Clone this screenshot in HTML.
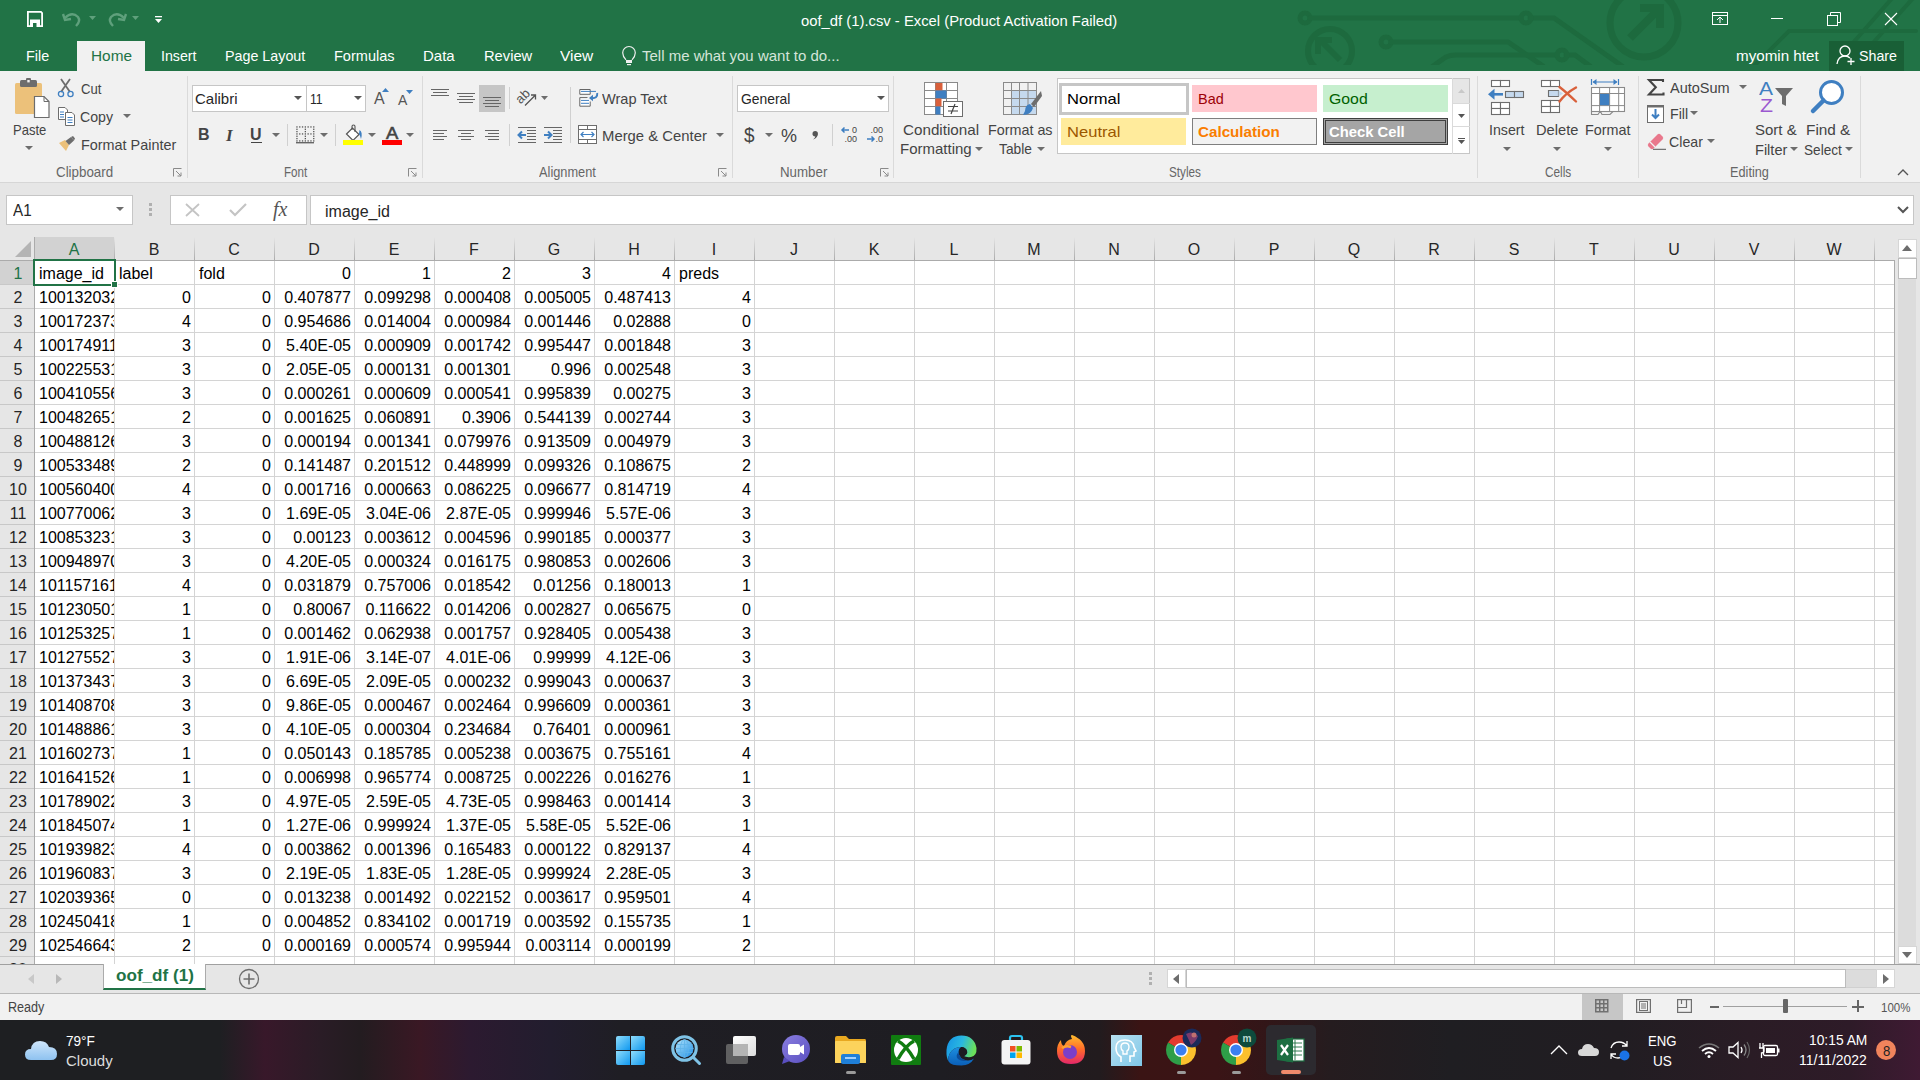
<!DOCTYPE html><html><head><meta charset="utf-8"><title>Excel</title><style>
*{box-sizing:border-box;margin:0;padding:0}
html,body{width:1920px;height:1080px;overflow:hidden;background:#fff}
body{position:relative;font-family:"Liberation Sans",sans-serif;color:#000}
.a{position:absolute}
.t{position:absolute;white-space:nowrap;line-height:1}
svg{position:absolute;overflow:visible}
#top{left:0;top:0;width:1920px;height:71px;background:#217346}
#rib{left:0;top:71px;width:1920px;height:112px;background:#f1f1f1;border-bottom:1px solid #d6d6d6}
#fb{left:0;top:183px;width:1920px;height:781px;background:#e6e6e6}
.rt{position:absolute;white-space:nowrap;line-height:1;font-size:15px;color:#262626}
.tab{position:absolute;white-space:nowrap;line-height:1;font-size:15px;color:#fff;top:48px}
.cell{position:absolute;white-space:nowrap;line-height:1;font-size:16px;color:#000;overflow:hidden;height:23px;padding-top:5px}
.r{text-align:right;padding-right:3px}
.l{text-align:left;padding-left:4px}
.hd{position:absolute;white-space:nowrap;line-height:1;font-size:16px;color:#262626;text-align:center}
.sep{position:absolute;width:1px;background:#d4d4d4}
</style></head><body>
<div id="top" class="a">
<svg width="1920" height="71" style="left:0;top:0" viewBox="0 0 1920 71">
<defs><clipPath id="dc"><rect x="0" y="0" width="1920" height="65"/></clipPath></defs>
<g clip-path="url(#dc)" stroke="#1d6a3e" stroke-width="5" fill="none" stroke-linecap="round">
<circle cx="1305" cy="18" r="5"/><path d="M1310 18 H1521 M1530 18 H1554 L1622 66"/><circle cx="1526" cy="18" r="5"/>
<circle cx="1386" cy="42" r="5"/><path d="M1391 42 H1508 L1543 66"/>
<path d="M1433 66 L1446 57 Q1450 55 1456 55 H1557 M1566 55 H1575 L1590 66"/><circle cx="1562" cy="55" r="5"/>
<circle cx="1644" cy="23" r="34" stroke-width="7"/>
<path d="M1630 38 L1660 8 M1640 8 H1660 V28" stroke-width="8" stroke-linecap="butt"/>
<circle cx="1330" cy="51" r="22" stroke-width="6"/>
<path d="M1340 60 L1320 40 M1318 54 V40 H1332" stroke-width="6" stroke-linecap="butt"/>
<path d="M1752 68 L1789 31 H1916 M1894 -4 L1852 44 M1915 -4 L1872 44" stroke-width="4"/>
</g></svg>
<svg width="18" height="18" style="left:26px;top:10px" viewBox="0 0 18 18">
<path d="M1.9 1.9 H15 L16.1 3 V16.1 H1.9 Z" fill="none" stroke="#fff" stroke-width="1.8"/>
<rect x="4" y="9.5" width="10" height="1.6" fill="#fff"/>
<rect x="4" y="11" width="10" height="6" fill="#fff"/><rect x="7" y="13" width="3.5" height="4" fill="#217346"/>
</svg>
<svg width="22" height="20" style="left:62px;top:10px" viewBox="0 0 22 20"><path d="M3 8 Q10 1 16 7 Q19 11 14 16" fill="none" stroke="#5fa07c" stroke-width="2.4"/><path d="M1 4 L3 10 L9 9" fill="none" stroke="#5fa07c" stroke-width="2.4"/></svg>
<svg width="8" height="5" style="left:89px;top:16px" viewBox="0 0 8 5"><path d="M0 0 H7 L3.5 4 Z" fill="#5fa07c"/></svg>
<svg width="22" height="20" style="left:105px;top:10px" viewBox="0 0 22 20"><path d="M19 8 Q12 1 6 7 Q3 11 8 16" fill="none" stroke="#5fa07c" stroke-width="2.4"/><path d="M21 4 L19 10 L13 9" fill="none" stroke="#5fa07c" stroke-width="2.4"/></svg>
<svg width="8" height="5" style="left:132px;top:16px" viewBox="0 0 8 5"><path d="M0 0 H7 L3.5 4 Z" fill="#5fa07c"/></svg>
<svg width="10" height="12" style="left:154px;top:14px" viewBox="0 0 10 12"><rect x="1" y="2" width="7" height="1.3" fill="#fff"/><path d="M1 5 H8 L4.5 9 Z" fill="#fff"/></svg>
<div class="t" style="left:801.00px;top:13px;font-size:15px;color:#fff;transform:scaleX(0.9875);transform-origin:0 0;">oof_df (1).csv - Excel (Product Activation Failed)</div>
<svg width="16" height="14" style="left:1712px;top:12px" viewBox="0 0 16 14"><rect x="0.5" y="0.5" width="15" height="12" fill="none" stroke="#fff"/><path d="M0.5 3.5 H15.5 M8 11 V5 M5 8 L8 5 L11 8" fill="none" stroke="#fff"/></svg>
<div class="a" style="left:1771px;top:18px;width:12px;height:1px;background:#fff"></div>
<svg width="14" height="14" style="left:1827px;top:12px" viewBox="0 0 14 14"><rect x="0.5" y="3.5" width="10" height="10" fill="none" stroke="#fff"/><path d="M3.5 3.5 V0.5 H13.5 V10.5 H10.5" fill="none" stroke="#fff"/></svg>
<svg width="14" height="14" style="left:1884px;top:12px" viewBox="0 0 14 14"><path d="M1 1 L13 13 M13 1 L1 13" stroke="#fff" stroke-width="1.1"/></svg>
<div class="a" style="left:77px;top:41px;width:68px;height:30px;background:#f1f1f1"></div>
<div class="t" style="left:26.00px;top:48px;font-size:15px;color:#fff;transform:scaleX(0.9583);transform-origin:0 0;">File</div>
<div class="t" style="left:91.00px;top:48px;font-size:15px;color:#217346;transform:scaleX(1.0250);transform-origin:0 0;">Home</div>
<div class="t" style="left:161.00px;top:48px;font-size:15px;color:#fff;transform:scaleX(0.9474);transform-origin:0 0;">Insert</div>
<div class="t" style="left:225.00px;top:48px;font-size:15px;color:#fff;transform:scaleX(0.9529);transform-origin:0 0;">Page Layout</div>
<div class="t" style="left:334.00px;top:48px;font-size:15px;color:#fff;transform:scaleX(0.9683);transform-origin:0 0;">Formulas</div>
<div class="t" style="left:423.00px;top:48px;font-size:15px;color:#fff;">Data</div>
<div class="t" style="left:484.00px;top:48px;font-size:15px;color:#fff;transform:scaleX(0.9796);transform-origin:0 0;">Review</div>
<div class="t" style="left:560.00px;top:48px;font-size:15px;color:#fff;transform:scaleX(1.0312);transform-origin:0 0;">View</div>
<svg width="14" height="20" style="left:622px;top:46px" viewBox="0 0 14 20"><path d="M4 13.8 Q0.7 10.5 0.7 6.8 A6.3 6.3 0 0 1 13.3 6.8 Q13.3 10.5 10 13.8" fill="none" stroke="#f0f0f0" stroke-width="1.2"/><rect x="4" y="14" width="6" height="3" fill="#f0f0f0"/><rect x="5" y="18" width="4" height="1.2" fill="#f0f0f0"/></svg>
<div class="t" style="left:642.00px;top:48px;font-size:15px;color:#d5e5da;">Tell me what you want to do...</div>
<div class="t" style="left:1736.00px;top:48px;font-size:15px;color:#fff;transform:scaleX(1.0120);transform-origin:0 0;">myomin htet</div>
<div class="a" style="left:1829px;top:41px;width:75px;height:30px;background:#195f36"></div>
<svg width="20" height="20" style="left:1836px;top:45px" viewBox="0 0 20 20"><circle cx="9" cy="6" r="5" fill="none" stroke="#fff" stroke-width="1.3"/><path d="M1 19 Q2 11 9 11 Q12 11 14 13" fill="none" stroke="#fff" stroke-width="1.3"/><path d="M15 13 V20 M11.5 16.5 H18.5" stroke="#fff" stroke-width="1.3"/></svg>
<div class="t" style="left:1859.00px;top:48px;font-size:15px;color:#fff;transform:scaleX(0.9500);transform-origin:0 0;">Share</div>
</div>
<div id="rib" class="a"></div>
<div class="sep" style="left:187px;top:76px;height:102px;background:#dadada"></div>
<div class="sep" style="left:422px;top:76px;height:102px;background:#dadada"></div>
<div class="sep" style="left:732px;top:76px;height:102px;background:#dadada"></div>
<div class="sep" style="left:893px;top:76px;height:102px;background:#dadada"></div>
<div class="sep" style="left:1477px;top:76px;height:102px;background:#dadada"></div>
<div class="sep" style="left:1638px;top:76px;height:102px;background:#dadada"></div>
<div class="sep" style="left:1860px;top:76px;height:102px;background:#dadada"></div>
<div class="t" style="left:56.00px;top:164px;font-size:15px;color:#666;transform:scaleX(0.8906);transform-origin:0 0;">Clipboard</div>
<div class="t" style="left:284.00px;top:164px;font-size:15px;color:#666;transform:scaleX(0.7742);transform-origin:0 0;">Font</div>
<div class="t" style="left:539.00px;top:164px;font-size:15px;color:#666;transform:scaleX(0.8529);transform-origin:0 0;">Alignment</div>
<div class="t" style="left:780.00px;top:164px;font-size:15px;color:#666;transform:scaleX(0.8868);transform-origin:0 0;">Number</div>
<div class="t" style="left:1169.00px;top:164px;font-size:15px;color:#666;transform:scaleX(0.7805);transform-origin:0 0;">Styles</div>
<div class="t" style="left:1545.00px;top:164px;font-size:15px;color:#666;transform:scaleX(0.7879);transform-origin:0 0;">Cells</div>
<div class="t" style="left:1730.00px;top:164px;font-size:15px;color:#666;transform:scaleX(0.8478);transform-origin:0 0;">Editing</div>
<svg width="40" height="42" style="left:12px;top:78px" viewBox="0 0 40 42">
<rect x="3" y="5" width="27" height="31" rx="1.5" fill="#ecc17a"/>
<rect x="8" y="2" width="17" height="7" rx="1.5" fill="#6d6d6d"/><rect x="14" y="0" width="5" height="5" rx="1" fill="#6d6d6d"/><rect x="15.3" y="2" width="2.4" height="2.4" fill="#f1f1f1"/>
<path d="M22.5 18.5 H32 L37 23.5 V39.5 H22.5 Z" fill="#fff" stroke="#6d6d6d" stroke-width="1.2"/><path d="M32 18.5 V23.5 H37" fill="none" stroke="#6d6d6d" stroke-width="1"/>
</svg>
<div class="t" style="left:13.00px;top:122px;font-size:15px;color:#444;transform:scaleX(0.8684);transform-origin:0 0;">Paste</div>
<svg width="8" height="5" style="left:25px;top:146px" viewBox="0 0 8 5"><path d="M0 0 H8 L4 4 Z" fill="#6d6d6d"/></svg>
<svg width="18" height="19" style="left:57px;top:79px" viewBox="0 0 18 19">
<path d="M4 0 L13 13 M13 0 L4 13" stroke="#6d6d6d" stroke-width="1.8"/>
<circle cx="4" cy="15" r="2.6" fill="none" stroke="#3f7fc1" stroke-width="1.3"/><circle cx="13.5" cy="15" r="2.6" fill="none" stroke="#3f7fc1" stroke-width="1.3"/>
</svg>
<div class="t" style="left:81.00px;top:81px;font-size:15px;color:#444;transform:scaleX(0.8750);transform-origin:0 0;">Cut</div>
<svg width="18" height="19" style="left:58px;top:107px" viewBox="0 0 18 19">
<path d="M0.5 0.5 H7 L9.5 3 V12.5 H0.5 Z" fill="#fff" stroke="#6d6d6d"/>
<path d="M7.5 5.5 H14 L16.5 8 V18.5 H7.5 Z" fill="#fff" stroke="#6d6d6d"/>
<path d="M2 5 H6 M2 7.5 H6 M2 10 H6 M9.5 10.5 H14.5 M9.5 13 H14.5 M9.5 15.5 H14.5" stroke="#3f7fc1" stroke-width="1"/>
</svg>
<div class="t" style="left:80.00px;top:109px;font-size:15px;color:#444;transform:scaleX(0.9444);transform-origin:0 0;">Copy</div>
<svg width="8" height="5" style="left:123px;top:114px" viewBox="0 0 8 5"><path d="M0 0 H8 L4 4 Z" fill="#6d6d6d"/></svg>
<svg width="18" height="16" style="left:58px;top:136px" viewBox="0 0 18 16">
<path d="M1 7 L7 4 L11 9 L8 15 Z" fill="#ecc17a"/><path d="M7.5 5 L13 1 L16 4.5 L11 9 Z" fill="#6d6d6d"/><path d="M13 1 L15 0 L17 2.5 L16 4.5" fill="#6d6d6d"/>
</svg>
<div class="t" style="left:81.00px;top:137px;font-size:15px;color:#444;transform:scaleX(0.9596);transform-origin:0 0;">Format Painter</div>
<svg width="9" height="9" style="left:173px;top:168px" viewBox="0 0 9 9"><path d="M0.5 8.5 V0.5 H8.5" fill="none" stroke="#8a8a8a"/><path d="M3 3 L8 8 M8 4.5 V8 H4.5" fill="none" stroke="#8a8a8a"/></svg>
<div class="a" style="left:192px;top:85px;width:115px;height:27px;background:#fff;border:1px solid #c6c6c6"></div>
<div class="a" style="left:306px;top:85px;width:60px;height:27px;background:#fff;border:1px solid #c6c6c6"></div>
<div class="t" style="left:195.00px;top:91px;font-size:15px;color:#262626;">Calibri</div>
<div class="t" style="left:310.00px;top:91px;font-size:15px;color:#262626;transform:scaleX(0.8125);transform-origin:0 0;">11</div>
<svg width="8" height="5" style="left:294px;top:96px" viewBox="0 0 8 5"><path d="M0 0 H8 L4 4 Z" fill="#555"/></svg>
<svg width="8" height="5" style="left:354px;top:96px" viewBox="0 0 8 5"><path d="M0 0 H8 L4 4 Z" fill="#555"/></svg>
<div class="rt" style="left:374px;top:91px;font-size:16px;color:#555">A</div>
<svg width="7" height="4" style="left:382px;top:88px" viewBox="0 0 7 4"><path d="M0 4 H7 L3.5 0 Z" fill="#3f7fc1"/></svg>
<div class="rt" style="left:398px;top:93px;font-size:14px;color:#555">A</div>
<svg width="7" height="4" style="left:406px;top:90px" viewBox="0 0 7 4"><path d="M0 0 H7 L3.5 4 Z" fill="#3f7fc1"/></svg>
<div class="rt" style="left:198px;top:127px;font-size:16px;font-weight:bold;color:#444">B</div>
<div class="rt" style="left:226px;top:127px;font-size:17px;font-style:italic;font-family:'Liberation Serif',serif;font-weight:bold;color:#444">I</div>
<div class="rt" style="left:250px;top:127px;font-size:16px;font-weight:bold;color:#444">U</div>
<div class="a" style="left:251px;top:142px;width:11px;height:1px;background:#444"></div>
<svg width="8" height="5" style="left:272px;top:133px" viewBox="0 0 8 5"><path d="M0 0 H8 L4 4 Z" fill="#6d6d6d"/></svg>
<div class="sep" style="left:287px;top:124px;height:22px;background:#d0d0d0"></div>
<svg width="19" height="19" style="left:296px;top:126px" viewBox="0 0 19 19"><rect x="0.30" y="0.30" width="1.3" height="1.3" fill="#555"/><rect x="3.10" y="0.30" width="1.3" height="1.3" fill="#555"/><rect x="5.90" y="0.30" width="1.3" height="1.3" fill="#555"/><rect x="8.70" y="0.30" width="1.3" height="1.3" fill="#555"/><rect x="11.50" y="0.30" width="1.3" height="1.3" fill="#555"/><rect x="14.30" y="0.30" width="1.3" height="1.3" fill="#555"/><rect x="17.10" y="0.30" width="1.3" height="1.3" fill="#555"/><rect x="0.30" y="2.63" width="1.3" height="1.3" fill="#555"/><rect x="8.70" y="2.63" width="1.3" height="1.3" fill="#555"/><rect x="17.10" y="2.63" width="1.3" height="1.3" fill="#555"/><rect x="0.30" y="4.96" width="1.3" height="1.3" fill="#555"/><rect x="8.70" y="4.96" width="1.3" height="1.3" fill="#555"/><rect x="17.10" y="4.96" width="1.3" height="1.3" fill="#555"/><rect x="0.30" y="7.29" width="1.3" height="1.3" fill="#555"/><rect x="3.10" y="7.29" width="1.3" height="1.3" fill="#555"/><rect x="5.90" y="7.29" width="1.3" height="1.3" fill="#555"/><rect x="8.70" y="7.29" width="1.3" height="1.3" fill="#555"/><rect x="11.50" y="7.29" width="1.3" height="1.3" fill="#555"/><rect x="14.30" y="7.29" width="1.3" height="1.3" fill="#555"/><rect x="17.10" y="7.29" width="1.3" height="1.3" fill="#555"/><rect x="0.30" y="9.62" width="1.3" height="1.3" fill="#555"/><rect x="8.70" y="9.62" width="1.3" height="1.3" fill="#555"/><rect x="17.10" y="9.62" width="1.3" height="1.3" fill="#555"/><rect x="0.30" y="11.95" width="1.3" height="1.3" fill="#555"/><rect x="8.70" y="11.95" width="1.3" height="1.3" fill="#555"/><rect x="17.10" y="11.95" width="1.3" height="1.3" fill="#555"/><rect x="0.30" y="14.28" width="1.3" height="1.3" fill="#555"/><rect x="3.10" y="14.28" width="1.3" height="1.3" fill="#555"/><rect x="5.90" y="14.28" width="1.3" height="1.3" fill="#555"/><rect x="8.70" y="14.28" width="1.3" height="1.3" fill="#555"/><rect x="11.50" y="14.28" width="1.3" height="1.3" fill="#555"/><rect x="14.30" y="14.28" width="1.3" height="1.3" fill="#555"/><rect x="17.10" y="14.28" width="1.3" height="1.3" fill="#555"/><rect x="0" y="16" width="18" height="1.4" fill="#666"/></svg>
<svg width="8" height="5" style="left:320px;top:133px" viewBox="0 0 8 5"><path d="M0 0 H8 L4 4 Z" fill="#6d6d6d"/></svg>
<div class="sep" style="left:335px;top:124px;height:22px;background:#d0d0d0"></div>
<svg width="24" height="22" style="left:342px;top:124px" viewBox="0 0 24 22"><path d="M4.5 10 L10.5 4 L17 10.5 L11 16.5 Z" fill="#fff" stroke="#555" stroke-width="1.2"/><path d="M10 6 V2.5 Q10 1 11.5 1 Q13 1 13 2.5 V8" fill="none" stroke="#555" stroke-width="1.1"/><path d="M17.5 6 Q21 8 19 15 Q18 11 17 10 Z" fill="#3f7fc1"/><rect x="1" y="16" width="20" height="5" fill="#ffff00"/></svg>
<svg width="8" height="5" style="left:368px;top:133px" viewBox="0 0 8 5"><path d="M0 0 H8 L4 4 Z" fill="#6d6d6d"/></svg>
<div class="t" style="left:386.00px;top:125px;font-size:17px;color:#444;transform:scaleX(1.0833);transform-origin:0 0;-webkit-text-stroke:0.6px #444;">A</div>
<div class="a" style="left:382px;top:140px;width:20px;height:5px;background:#ff0000"></div>
<svg width="8" height="5" style="left:406px;top:133px" viewBox="0 0 8 5"><path d="M0 0 H8 L4 4 Z" fill="#6d6d6d"/></svg>
<svg width="9" height="9" style="left:408px;top:168px" viewBox="0 0 9 9"><path d="M0.5 8.5 V0.5 H8.5" fill="none" stroke="#8a8a8a"/><path d="M3 3 L8 8 M8 4.5 V8 H4.5" fill="none" stroke="#8a8a8a"/></svg>
<div class="a" style="left:431px;top:89px;width:18px;height:1px;background:#666"></div><div class="a" style="left:433px;top:92px;width:14px;height:1px;background:#666"></div><div class="a" style="left:431px;top:95px;width:18px;height:1px;background:#666"></div>
<div class="a" style="left:457px;top:93px;width:18px;height:1px;background:#666"></div><div class="a" style="left:459px;top:96px;width:14px;height:1px;background:#666"></div><div class="a" style="left:457px;top:99px;width:18px;height:1px;background:#666"></div><div class="a" style="left:459px;top:102px;width:14px;height:1px;background:#666"></div>
<div class="a" style="left:479px;top:85px;width:26px;height:27px;background:#c6c6c6"></div>
<div class="a" style="left:483px;top:97px;width:18px;height:1px;background:#666"></div><div class="a" style="left:485px;top:100px;width:14px;height:1px;background:#666"></div><div class="a" style="left:483px;top:103px;width:18px;height:1px;background:#666"></div><div class="a" style="left:485px;top:106px;width:14px;height:1px;background:#666"></div>
<div class="sep" style="left:509px;top:87px;height:22px;background:#d0d0d0"></div>
<svg width="24" height="22" style="left:514px;top:86px" viewBox="0 0 24 22"><text x="1" y="15" font-family="Liberation Sans" font-size="13" fill="#555" transform="rotate(-45 8 10)">ab</text><path d="M11 19.5 L21.5 9 M17 9 H21.5 V13.5" fill="none" stroke="#555" stroke-width="1.3"/></svg>
<svg width="7" height="4" style="left:541px;top:96px" viewBox="0 0 7 4"><path d="M0 0 H7 L3.5 4 Z" fill="#6d6d6d"/></svg>
<div class="a" style="left:433px;top:130px;width:14px;height:1px;background:#666"></div><div class="a" style="left:433px;top:133px;width:11px;height:1px;background:#666"></div><div class="a" style="left:433px;top:136px;width:14px;height:1px;background:#666"></div><div class="a" style="left:433px;top:139px;width:11px;height:1px;background:#666"></div>
<div class="a" style="left:458px;top:130px;width:16px;height:1px;background:#666"></div><div class="a" style="left:461px;top:133px;width:10px;height:1px;background:#666"></div><div class="a" style="left:458px;top:136px;width:16px;height:1px;background:#666"></div><div class="a" style="left:461px;top:139px;width:10px;height:1px;background:#666"></div>
<div class="a" style="left:485px;top:130px;width:14px;height:1px;background:#666"></div><div class="a" style="left:488px;top:133px;width:11px;height:1px;background:#666"></div><div class="a" style="left:485px;top:136px;width:14px;height:1px;background:#666"></div><div class="a" style="left:488px;top:139px;width:11px;height:1px;background:#666"></div>
<div class="sep" style="left:509px;top:124px;height:22px;background:#d0d0d0"></div>
<div class="a" style="left:518px;top:127px;width:18px;height:1px;background:#666"></div><div class="a" style="left:527px;top:130px;width:9px;height:1px;background:#666"></div><div class="a" style="left:527px;top:133px;width:9px;height:1px;background:#666"></div><div class="a" style="left:527px;top:136px;width:9px;height:1px;background:#666"></div><div class="a" style="left:527px;top:139px;width:9px;height:1px;background:#666"></div><div class="a" style="left:518px;top:142px;width:18px;height:1px;background:#666"></div>
<svg width="10" height="10" style="left:517px;top:130px" viewBox="0 0 10 10"><path d="M9 5 H2 M5 1.5 L1.5 5 L5 8.5" fill="none" stroke="#3f7fc1" stroke-width="2"/></svg>
<div class="a" style="left:544px;top:127px;width:18px;height:1px;background:#666"></div><div class="a" style="left:553px;top:130px;width:9px;height:1px;background:#666"></div><div class="a" style="left:553px;top:133px;width:9px;height:1px;background:#666"></div><div class="a" style="left:553px;top:136px;width:9px;height:1px;background:#666"></div><div class="a" style="left:553px;top:139px;width:9px;height:1px;background:#666"></div><div class="a" style="left:544px;top:142px;width:18px;height:1px;background:#666"></div>
<svg width="10" height="10" style="left:543px;top:130px" viewBox="0 0 10 10"><path d="M1 5 H8 M5 1.5 L8.5 5 L5 8.5" fill="none" stroke="#3f7fc1" stroke-width="2"/></svg>
<div class="sep" style="left:570px;top:87px;height:56px;background:#d0d0d0"></div>
<svg width="26" height="26" style="left:574px;top:84px" viewBox="0 0 26 26"><path d="M5.8 5.5 H16.2 V10.3 H5.8 Z M13.5 13.6 H5.8 V22.2 H16.2 V17.5" fill="#fff" stroke="#666" stroke-width="1"/><path d="M7 7.4 H22 M7 16.4 H15 M7 19.3 H15" stroke="#3f7fc1" stroke-width="1"/><path d="M23.2 9 Q24 15 16.5 14" fill="none" stroke="#3f7fc1" stroke-width="2"/><path d="M15 14 L19 10.8 V17.2 Z" fill="#3f7fc1"/></svg>
<div class="t" style="left:602.00px;top:91px;font-size:15px;color:#444;transform:scaleX(0.9706);transform-origin:0 0;">Wrap Text</div>
<svg width="20" height="20" style="left:578px;top:125px" viewBox="0 0 20 20"><rect x="0.5" y="0.5" width="18" height="18" fill="#fff" stroke="#6d6d6d"/><path d="M0.5 4.5 H18.5 M0.5 14.5 H18.5 M9.5 0.5 V4.5 M9.5 14.5 V18.5" stroke="#6d6d6d"/><path d="M3 9.5 H16 M5.5 7 L3 9.5 L5.5 12 M13.5 7 L16 9.5 L13.5 12" fill="none" stroke="#3f7fc1" stroke-width="1.2"/></svg>
<div class="t" style="left:602.00px;top:128px;font-size:15px;color:#444;transform:scaleX(0.9906);transform-origin:0 0;">Merge &amp; Center</div>
<svg width="8" height="5" style="left:716px;top:133px" viewBox="0 0 8 5"><path d="M0 0 H8 L4 4 Z" fill="#6d6d6d"/></svg>
<svg width="9" height="9" style="left:718px;top:168px" viewBox="0 0 9 9"><path d="M0.5 8.5 V0.5 H8.5" fill="none" stroke="#8a8a8a"/><path d="M3 3 L8 8 M8 4.5 V8 H4.5" fill="none" stroke="#8a8a8a"/></svg>
<div class="a" style="left:737px;top:85px;width:152px;height:27px;background:#fff;border:1px solid #c6c6c6"></div>
<div class="t" style="left:741.00px;top:91px;font-size:15px;color:#262626;transform:scaleX(0.9245);transform-origin:0 0;">General</div>
<svg width="8" height="5" style="left:877px;top:96px" viewBox="0 0 8 5"><path d="M0 0 H8 L4 4 Z" fill="#555"/></svg>
<div class="rt" style="left:744px;top:124px;font-size:21px;color:#444;transform:scaleX(0.9);transform-origin:0 0">$</div>
<svg width="8" height="5" style="left:765px;top:133px" viewBox="0 0 8 5"><path d="M0 0 H8 L4 4 Z" fill="#6d6d6d"/></svg>
<div class="t" style="left:781.00px;top:127px;font-size:18px;color:#444;">%</div>
<svg width="8" height="9" style="left:811px;top:131px" viewBox="0 0 8 9"><circle cx="4.2" cy="2.8" r="2.7" fill="#555"/><path d="M6.5 3.5 Q6.5 7 2 8.5 Q4.5 6.5 4.5 4.5 Z" fill="#555"/></svg>
<div class="sep" style="left:832px;top:124px;height:22px;background:#d0d0d0"></div>
<div class="rt" style="left:843px;top:126px;font-size:9px;color:#444;line-height:9px;text-align:right;width:14px">0<br>.00</div>
<svg width="8" height="6" style="left:841px;top:127px" viewBox="0 0 8 6"><path d="M8 3 H1 M3.5 0.5 L1 3 L3.5 5.5" fill="none" stroke="#3f7fc1" stroke-width="1.5"/></svg>
<div class="rt" style="left:867px;top:126px;font-size:9px;color:#444;line-height:9px;text-align:right;width:16px">.00<br>.0</div>
<svg width="8" height="6" style="left:867px;top:136px" viewBox="0 0 8 6"><path d="M0 3 H7 M4.5 0.5 L7 3 L4.5 5.5" fill="none" stroke="#3f7fc1" stroke-width="1.5"/></svg>
<svg width="9" height="9" style="left:880px;top:168px" viewBox="0 0 9 9"><path d="M0.5 8.5 V0.5 H8.5" fill="none" stroke="#8a8a8a"/><path d="M3 3 L8 8 M8 4.5 V8 H4.5" fill="none" stroke="#8a8a8a"/></svg>
<svg width="40" height="36" style="left:924px;top:82px" viewBox="0 0 40 36">
<rect x="0.5" y="0.5" width="33" height="32" fill="#fff" stroke="#8a8a8a"/>
<path d="M11.5 0.5 V33 M22.5 0.5 V33 M0.5 8.5 H34 M0.5 16.5 H34 M0.5 24.5 H34" stroke="#8a8a8a"/>
<rect x="11.5" y="1" width="7" height="7.5" fill="#d9603b"/><rect x="11.5" y="8.5" width="11" height="8" fill="#3f7fc1"/><rect x="11.5" y="16.5" width="6" height="8" fill="#d9603b"/><rect x="11.5" y="24.5" width="5" height="8" fill="#3f7fc1"/>
<rect x="19.5" y="19.5" width="19" height="15" fill="#fff" stroke="#6d6d6d"/>
<path d="M24 24.5 H34 M24 29 H34 M31 22 L27 32" stroke="#444" stroke-width="1.2"/>
</svg>
<div class="t" style="left:903.00px;top:122px;font-size:15px;color:#444;transform:scaleX(1.0133);transform-origin:0 0;">Conditional</div>
<div class="t" style="left:900.00px;top:141px;font-size:15px;color:#444;">Formatting</div>
<svg width="8" height="5" style="left:975px;top:147px" viewBox="0 0 8 5"><path d="M0 0 H8 L4 4 Z" fill="#6d6d6d"/></svg>
<svg width="40" height="36" style="left:1003px;top:82px" viewBox="0 0 40 36">
<rect x="8.5" y="8.5" width="25" height="24" fill="#c5d9ee"/>
<rect x="0.5" y="0.5" width="33" height="32" fill="none" stroke="#8a8a8a"/>
<path d="M8.5 0.5 V33 M16.5 0.5 V33 M25 0.5 V33 M0.5 8.5 H34 M0.5 16.5 H34 M0.5 24.5 H34" stroke="#8a8a8a"/>
<path d="M38 9 L28 22 L31 25 L39 14 Z" fill="#6d6d6d"/><path d="M27 22 Q22 23 22 29 L20 33 Q28 33 30 26 Z" fill="#3f7fc1"/>
</svg>
<div class="t" style="left:988.00px;top:122px;font-size:15px;color:#444;transform:scaleX(0.9559);transform-origin:0 0;">Format as</div>
<div class="t" style="left:999.00px;top:141px;font-size:15px;color:#444;transform:scaleX(0.9167);transform-origin:0 0;">Table</div>
<svg width="8" height="5" style="left:1037px;top:147px" viewBox="0 0 8 5"><path d="M0 0 H8 L4 4 Z" fill="#6d6d6d"/></svg>
<div class="a" style="left:1057px;top:78px;width:413px;height:76px;background:#fff;border:1px solid #c6c6c6"></div>
<div class="a" style="left:1452px;top:78px;width:18px;height:76px;border-left:1px solid #dadada"></div>
<div class="a" style="left:1453px;top:79px;width:16px;height:25px;background:#e6e6e6"></div>
<div class="a" style="left:1452px;top:103px;width:18px;height:1px;background:#dadada"></div>
<div class="a" style="left:1452px;top:126px;width:18px;height:1px;background:#dadada"></div>
<svg width="7" height="4" style="left:1458px;top:89px" viewBox="0 0 7 4"><path d="M0 4 H7 L3.5 0 Z" fill="#c8c8c8"/></svg>
<svg width="7" height="4" style="left:1458px;top:114px" viewBox="0 0 7 4"><path d="M0 0 H7 L3.5 4 Z" fill="#555"/></svg>
<svg width="7" height="6" style="left:1458px;top:138px" viewBox="0 0 7 6"><rect x="0" y="0" width="7" height="1" fill="#555"/><path d="M0 2 H7 L3.5 6 Z" fill="#555"/></svg>
<div class="a" style="left:1059px;top:83px;width:130px;height:32px;background:#fff;border:3px solid #c6c6c6"></div>
<div class="t" style="left:1067.00px;top:91px;font-size:15px;color:#000;transform:scaleX(1.1042);transform-origin:0 0;">Normal</div>
<div class="a" style="left:1192px;top:85px;width:125px;height:27px;background:#ffc7ce"></div>
<div class="t" style="left:1198.00px;top:91px;font-size:15px;color:#9c0006;transform:scaleX(0.9630);transform-origin:0 0;">Bad</div>
<div class="a" style="left:1323px;top:85px;width:125px;height:27px;background:#c6efce"></div>
<div class="t" style="left:1329.00px;top:91px;font-size:15px;color:#006100;transform:scaleX(1.0541);transform-origin:0 0;">Good</div>
<div class="a" style="left:1061px;top:118px;width:125px;height:27px;background:#ffeb9c"></div>
<div class="t" style="left:1067.00px;top:124px;font-size:15px;color:#9c5700;transform:scaleX(1.1042);transform-origin:0 0;">Neutral</div>
<div class="a" style="left:1192px;top:118px;width:125px;height:27px;background:#f2f2f2;border:1px solid #7f7f7f"></div>
<div class="t" style="left:1198.00px;top:124px;font-size:15px;color:#fa7d00;font-weight:bold;transform:scaleX(1.0123);transform-origin:0 0;">Calculation</div>
<div class="a" style="left:1323px;top:118px;width:125px;height:27px;background:#a5a5a5;border:3px double #3f3f3f"></div>
<div class="t" style="left:1329.00px;top:124px;font-size:15px;color:#fff;font-weight:bold;transform:scaleX(0.9870);transform-origin:0 0;">Check Cell</div>
<div class="t" style="left:1489.00px;top:122px;font-size:15px;color:#444;transform:scaleX(0.9474);transform-origin:0 0;">Insert</div>
<svg width="8" height="5" style="left:1503px;top:147px" viewBox="0 0 8 5"><path d="M0 0 H8 L4 4 Z" fill="#6d6d6d"/></svg>
<div class="t" style="left:1536.00px;top:122px;font-size:15px;color:#444;transform:scaleX(0.9767);transform-origin:0 0;">Delete</div>
<svg width="8" height="5" style="left:1553px;top:147px" viewBox="0 0 8 5"><path d="M0 0 H8 L4 4 Z" fill="#6d6d6d"/></svg>
<svg width="150" height="44" style="left:1480px;top:76px" viewBox="0 0 150 44">
<g fill="#fff" stroke="#6d6d6d" stroke-width="1.1">
<rect x="11.5" y="4.5" width="9" height="6"/><rect x="20.5" y="4.5" width="9" height="6"/>
<rect x="11.5" y="26.5" width="9" height="6"/><rect x="20.5" y="26.5" width="9" height="6"/><rect x="11.5" y="32.5" width="9" height="6"/><rect x="20.5" y="32.5" width="9" height="6"/>
<rect x="25.5" y="15.5" width="9" height="6" fill="#c5d9ee"/><rect x="34.5" y="15.5" width="9" height="6" fill="#c5d9ee"/>
<rect x="61.5" y="4.5" width="9" height="6"/><rect x="70.5" y="4.5" width="9" height="6"/>
<rect x="61.5" y="24.5" width="9" height="6"/><rect x="70.5" y="24.5" width="9" height="6"/><rect x="61.5" y="30.5" width="9" height="6"/><rect x="70.5" y="30.5" width="9" height="6"/>
<path d="M68.5 14.5 H78.5 V20.5 H68.5 Z" fill="#c5d9ee"/><path d="M78.5 14.5 L83 17.5 L78.5 20.5 Z" fill="#c5d9ee" stroke="none"/>
</g>
<path d="M23 18.3 H12" stroke="#3f7fc1" stroke-width="2.6"/><path d="M8 18.3 L14.5 12.8 V23.8 Z" fill="#3f7fc1"/>
<path d="M79.5 11 Q86 16 96 25.5 M96 11.5 Q86 17 79.5 25.5" fill="none" stroke="#d9603b" stroke-width="2.4" stroke-linecap="round"/>
<path d="M111.5 3 V9 M138.5 3 V9 M113 6 H137" stroke="#3f7fc1" stroke-width="1.2"/><path d="M112.5 6 L116.5 3 V9 Z M137.5 6 L133.5 3 V9 Z" fill="#3f7fc1"/>
<rect x="111.5" y="11.5" width="33" height="24" fill="#fff" stroke="#8a8a8a" stroke-width="1.1"/>
<path d="M119.6 11.5 V35.5 M129.6 11.5 V35.5 M138.7 11.5 V35.5 M111.5 17.5 H144.5 M111.5 29.6 H144.5" stroke="#8a8a8a" stroke-width="1"/>
<rect x="120" y="18" width="9.2" height="11.2" fill="#3f7fc1"/>
<path d="M111.5 35.5 V38.5 H118 L120 35.5 M120.5 35.5 L122 38.5 H130 L133 35.5" fill="none" stroke="#8a8a8a" stroke-width="1.1"/>
</svg>
<div class="t" style="left:1585.00px;top:122px;font-size:15px;color:#444;transform:scaleX(0.9583);transform-origin:0 0;">Format</div>
<svg width="8" height="5" style="left:1604px;top:147px" viewBox="0 0 8 5"><path d="M0 0 H8 L4 4 Z" fill="#6d6d6d"/></svg>
<svg width="18" height="18" style="left:1647px;top:78px" viewBox="0 0 18 18"><path d="M16 4 V2 H2 L8.8 9.3 L2 16.5 H16.5 V14.5" fill="none" stroke="#444" stroke-width="2.1" stroke-linejoin="miter"/></svg>
<div class="t" style="left:1670.00px;top:80px;font-size:15px;color:#444;transform:scaleX(0.9677);transform-origin:0 0;">AutoSum</div>
<svg width="8" height="5" style="left:1739px;top:85px" viewBox="0 0 8 5"><path d="M0 0 H8 L4 4 Z" fill="#6d6d6d"/></svg>
<svg width="18" height="18" style="left:1647px;top:105px" viewBox="0 0 18 18"><rect x="0.5" y="0.5" width="16" height="17" fill="#fff" stroke="#6d6d6d"/><rect x="0.5" y="0.5" width="16" height="2" fill="#6d6d6d"/><path d="M8.5 4 V13 M5 9.5 L8.5 13 L12 9.5" fill="none" stroke="#3f7fc1" stroke-width="2"/></svg>
<div class="t" style="left:1670.00px;top:106px;font-size:15px;color:#444;transform:scaleX(0.9474);transform-origin:0 0;">Fill</div>
<svg width="8" height="5" style="left:1690px;top:111px" viewBox="0 0 8 5"><path d="M0 0 H8 L4 4 Z" fill="#6d6d6d"/></svg>
<svg width="20" height="18" style="left:1647px;top:132px" viewBox="0 0 20 18"><path d="M1.5 11.5 L10.5 2.5 Q12 1 13.5 2.5 L15.5 4.5 Q17 6 15.5 7.5 L6.5 16.5 Q5 18 3.5 16.5 L1.5 14.5 Q0 13 1.5 11.5 Z" fill="#e9788c"/><path d="M3 10 L8 15" stroke="#f1f1f1" stroke-width="1.2"/><path d="M6 17.3 H19" stroke="#555" stroke-width="1"/></svg>
<div class="t" style="left:1669.00px;top:134px;font-size:15px;color:#444;transform:scaleX(0.9444);transform-origin:0 0;">Clear</div>
<svg width="8" height="5" style="left:1707px;top:139px" viewBox="0 0 8 5"><path d="M0 0 H8 L4 4 Z" fill="#6d6d6d"/></svg>
<div class="t" style="left:1759.00px;top:80px;font-size:18px;color:#3f7fc1;transform:scaleX(1.1667);transform-origin:0 0;">A</div>
<div class="t" style="left:1760.00px;top:97px;font-size:18px;color:#9b59d0;transform:scaleX(1.1818);transform-origin:0 0;">Z</div>
<svg width="18" height="20" style="left:1775px;top:87px" viewBox="0 0 18 20"><path d="M0 1 H18 L11 9 V19 L7 17 V9 Z" fill="#6d6d6d"/></svg>
<div class="t" style="left:1755.00px;top:122px;font-size:15px;color:#444;">Sort &amp;</div>
<div class="t" style="left:1755.00px;top:142px;font-size:15px;color:#444;transform:scaleX(0.9697);transform-origin:0 0;">Filter</div>
<svg width="8" height="5" style="left:1790px;top:147px" viewBox="0 0 8 5"><path d="M0 0 H8 L4 4 Z" fill="#6d6d6d"/></svg>
<svg width="36" height="36" style="left:1810px;top:79px" viewBox="0 0 36 36"><circle cx="21.5" cy="13.5" r="11" fill="#fff" stroke="#3f7fc1" stroke-width="3"/><path d="M13.5 21.5 L3 32" stroke="#3f7fc1" stroke-width="4.5" stroke-linecap="round"/></svg>
<div class="t" style="left:1806.00px;top:122px;font-size:15px;color:#444;transform:scaleX(1.0233);transform-origin:0 0;">Find &amp;</div>
<div class="t" style="left:1804.00px;top:142px;font-size:15px;color:#444;transform:scaleX(0.9070);transform-origin:0 0;">Select</div>
<svg width="8" height="5" style="left:1845px;top:147px" viewBox="0 0 8 5"><path d="M0 0 H8 L4 4 Z" fill="#6d6d6d"/></svg>
<svg width="12" height="8" style="left:1897px;top:168px" viewBox="0 0 12 8"><path d="M1 7 L6 2 L11 7" fill="none" stroke="#555" stroke-width="1.4"/></svg>
<div id="fb" class="a"></div>
<div class="a" style="left:6px;top:195px;width:127px;height:30px;background:#fff;border:1px solid #c6c6c6"></div>
<div class="t" style="left:13.00px;top:203px;font-size:16px;color:#262626;transform:scaleX(0.9500);transform-origin:0 0;">A1</div>
<svg width="8" height="5" style="left:116px;top:207px" viewBox="0 0 8 5"><path d="M0 0 H8 L4 4 Z" fill="#6d6d6d"/></svg>
<svg width="4" height="14" style="left:149px;top:203px" viewBox="0 0 4 14"><rect x="0" y="0" width="3" height="3" fill="#b0b0b0"/><rect x="0" y="5" width="3" height="3" fill="#b0b0b0"/><rect x="0" y="10" width="3" height="3" fill="#b0b0b0"/></svg>
<div class="a" style="left:170px;top:195px;width:137px;height:30px;background:#fff;border:1px solid #c6c6c6"></div>
<svg width="16" height="14" style="left:185px;top:203px" viewBox="0 0 16 14"><path d="M1 1 L14 13 M14 1 L1 13" stroke="#c4c4c4" stroke-width="1.8"/></svg>
<svg width="18" height="14" style="left:229px;top:203px" viewBox="0 0 18 14"><path d="M1 7 L6 12 L17 1" fill="none" stroke="#c4c4c4" stroke-width="2.2"/></svg>
<div class="t" style="left:273px;top:199px;font-size:20px;font-style:italic;font-family:'Liberation Serif',serif;color:#555">fx</div>
<div class="a" style="left:310px;top:195px;width:1604px;height:30px;background:#fff;border:1px solid #c6c6c6"></div>
<div class="t" style="left:325.00px;top:204px;font-size:16px;color:#262626;">image_id</div>
<svg width="12" height="8" style="left:1897px;top:206px" viewBox="0 0 12 8"><path d="M1 1 L6 6 L11 1" fill="none" stroke="#555" stroke-width="2"/></svg>
<div class="a" style="left:35px;top:261px;width:1860px;height:703px;background:#fff"></div>
<div class="a" style="left:35px;top:237px;width:79px;height:23px;background:#d2d2d2"></div>
<div class="a" style="left:0;top:261px;width:34px;height:23px;background:#d2d2d2"></div>
<div class="hd" style="left:34px;top:242px;width:80px;color:#217346">A</div>
<div class="hd" style="left:114px;top:242px;width:80px;">B</div>
<div class="hd" style="left:194px;top:242px;width:80px;">C</div>
<div class="hd" style="left:274px;top:242px;width:80px;">D</div>
<div class="hd" style="left:354px;top:242px;width:80px;">E</div>
<div class="hd" style="left:434px;top:242px;width:80px;">F</div>
<div class="hd" style="left:514px;top:242px;width:80px;">G</div>
<div class="hd" style="left:594px;top:242px;width:80px;">H</div>
<div class="hd" style="left:674px;top:242px;width:80px;">I</div>
<div class="hd" style="left:754px;top:242px;width:80px;">J</div>
<div class="hd" style="left:834px;top:242px;width:80px;">K</div>
<div class="hd" style="left:914px;top:242px;width:80px;">L</div>
<div class="hd" style="left:994px;top:242px;width:80px;">M</div>
<div class="hd" style="left:1074px;top:242px;width:80px;">N</div>
<div class="hd" style="left:1154px;top:242px;width:80px;">O</div>
<div class="hd" style="left:1234px;top:242px;width:80px;">P</div>
<div class="hd" style="left:1314px;top:242px;width:80px;">Q</div>
<div class="hd" style="left:1394px;top:242px;width:80px;">R</div>
<div class="hd" style="left:1474px;top:242px;width:80px;">S</div>
<div class="hd" style="left:1554px;top:242px;width:80px;">T</div>
<div class="hd" style="left:1634px;top:242px;width:80px;">U</div>
<div class="hd" style="left:1714px;top:242px;width:80px;">V</div>
<div class="hd" style="left:1794px;top:242px;width:80px;">W</div>
<div class="a" style="left:114px;top:237px;width:1px;height:23px;background:linear-gradient(#e6e6e6,#ababab)"></div>
<div class="a" style="left:194px;top:237px;width:1px;height:23px;background:linear-gradient(#e6e6e6,#ababab)"></div>
<div class="a" style="left:274px;top:237px;width:1px;height:23px;background:linear-gradient(#e6e6e6,#ababab)"></div>
<div class="a" style="left:354px;top:237px;width:1px;height:23px;background:linear-gradient(#e6e6e6,#ababab)"></div>
<div class="a" style="left:434px;top:237px;width:1px;height:23px;background:linear-gradient(#e6e6e6,#ababab)"></div>
<div class="a" style="left:514px;top:237px;width:1px;height:23px;background:linear-gradient(#e6e6e6,#ababab)"></div>
<div class="a" style="left:594px;top:237px;width:1px;height:23px;background:linear-gradient(#e6e6e6,#ababab)"></div>
<div class="a" style="left:674px;top:237px;width:1px;height:23px;background:linear-gradient(#e6e6e6,#ababab)"></div>
<div class="a" style="left:754px;top:237px;width:1px;height:23px;background:linear-gradient(#e6e6e6,#ababab)"></div>
<div class="a" style="left:834px;top:237px;width:1px;height:23px;background:linear-gradient(#e6e6e6,#ababab)"></div>
<div class="a" style="left:914px;top:237px;width:1px;height:23px;background:linear-gradient(#e6e6e6,#ababab)"></div>
<div class="a" style="left:994px;top:237px;width:1px;height:23px;background:linear-gradient(#e6e6e6,#ababab)"></div>
<div class="a" style="left:1074px;top:237px;width:1px;height:23px;background:linear-gradient(#e6e6e6,#ababab)"></div>
<div class="a" style="left:1154px;top:237px;width:1px;height:23px;background:linear-gradient(#e6e6e6,#ababab)"></div>
<div class="a" style="left:1234px;top:237px;width:1px;height:23px;background:linear-gradient(#e6e6e6,#ababab)"></div>
<div class="a" style="left:1314px;top:237px;width:1px;height:23px;background:linear-gradient(#e6e6e6,#ababab)"></div>
<div class="a" style="left:1394px;top:237px;width:1px;height:23px;background:linear-gradient(#e6e6e6,#ababab)"></div>
<div class="a" style="left:1474px;top:237px;width:1px;height:23px;background:linear-gradient(#e6e6e6,#ababab)"></div>
<div class="a" style="left:1554px;top:237px;width:1px;height:23px;background:linear-gradient(#e6e6e6,#ababab)"></div>
<div class="a" style="left:1634px;top:237px;width:1px;height:23px;background:linear-gradient(#e6e6e6,#ababab)"></div>
<div class="a" style="left:1714px;top:237px;width:1px;height:23px;background:linear-gradient(#e6e6e6,#ababab)"></div>
<div class="a" style="left:1794px;top:237px;width:1px;height:23px;background:linear-gradient(#e6e6e6,#ababab)"></div>
<div class="a" style="left:1874px;top:237px;width:1px;height:23px;background:linear-gradient(#e6e6e6,#ababab)"></div>
<div class="a" style="left:34px;top:237px;width:1px;height:23px;background:#ababab"></div>
<div class="a" style="left:0;top:260px;width:1895px;height:1px;background:#ababab"></div>
<div class="a" style="left:114px;top:261px;width:1px;height:703px;background:#d4d4d4"></div>
<div class="a" style="left:194px;top:261px;width:1px;height:703px;background:#d4d4d4"></div>
<div class="a" style="left:274px;top:261px;width:1px;height:703px;background:#d4d4d4"></div>
<div class="a" style="left:354px;top:261px;width:1px;height:703px;background:#d4d4d4"></div>
<div class="a" style="left:434px;top:261px;width:1px;height:703px;background:#d4d4d4"></div>
<div class="a" style="left:514px;top:261px;width:1px;height:703px;background:#d4d4d4"></div>
<div class="a" style="left:594px;top:261px;width:1px;height:703px;background:#d4d4d4"></div>
<div class="a" style="left:674px;top:261px;width:1px;height:703px;background:#d4d4d4"></div>
<div class="a" style="left:754px;top:261px;width:1px;height:703px;background:#d4d4d4"></div>
<div class="a" style="left:834px;top:261px;width:1px;height:703px;background:#d4d4d4"></div>
<div class="a" style="left:914px;top:261px;width:1px;height:703px;background:#d4d4d4"></div>
<div class="a" style="left:994px;top:261px;width:1px;height:703px;background:#d4d4d4"></div>
<div class="a" style="left:1074px;top:261px;width:1px;height:703px;background:#d4d4d4"></div>
<div class="a" style="left:1154px;top:261px;width:1px;height:703px;background:#d4d4d4"></div>
<div class="a" style="left:1234px;top:261px;width:1px;height:703px;background:#d4d4d4"></div>
<div class="a" style="left:1314px;top:261px;width:1px;height:703px;background:#d4d4d4"></div>
<div class="a" style="left:1394px;top:261px;width:1px;height:703px;background:#d4d4d4"></div>
<div class="a" style="left:1474px;top:261px;width:1px;height:703px;background:#d4d4d4"></div>
<div class="a" style="left:1554px;top:261px;width:1px;height:703px;background:#d4d4d4"></div>
<div class="a" style="left:1634px;top:261px;width:1px;height:703px;background:#d4d4d4"></div>
<div class="a" style="left:1714px;top:261px;width:1px;height:703px;background:#d4d4d4"></div>
<div class="a" style="left:1794px;top:261px;width:1px;height:703px;background:#d4d4d4"></div>
<div class="a" style="left:1874px;top:261px;width:1px;height:703px;background:#d4d4d4"></div>
<div class="a" style="left:1894px;top:260px;width:1px;height:704px;background:#ababab"></div>
<div class="a" style="left:35px;top:284px;width:1859px;height:1px;background:#d4d4d4"></div>
<div class="a" style="left:35px;top:308px;width:1859px;height:1px;background:#d4d4d4"></div>
<div class="a" style="left:35px;top:332px;width:1859px;height:1px;background:#d4d4d4"></div>
<div class="a" style="left:35px;top:356px;width:1859px;height:1px;background:#d4d4d4"></div>
<div class="a" style="left:35px;top:380px;width:1859px;height:1px;background:#d4d4d4"></div>
<div class="a" style="left:35px;top:404px;width:1859px;height:1px;background:#d4d4d4"></div>
<div class="a" style="left:35px;top:428px;width:1859px;height:1px;background:#d4d4d4"></div>
<div class="a" style="left:35px;top:452px;width:1859px;height:1px;background:#d4d4d4"></div>
<div class="a" style="left:35px;top:476px;width:1859px;height:1px;background:#d4d4d4"></div>
<div class="a" style="left:35px;top:500px;width:1859px;height:1px;background:#d4d4d4"></div>
<div class="a" style="left:35px;top:524px;width:1859px;height:1px;background:#d4d4d4"></div>
<div class="a" style="left:35px;top:548px;width:1859px;height:1px;background:#d4d4d4"></div>
<div class="a" style="left:35px;top:572px;width:1859px;height:1px;background:#d4d4d4"></div>
<div class="a" style="left:35px;top:596px;width:1859px;height:1px;background:#d4d4d4"></div>
<div class="a" style="left:35px;top:620px;width:1859px;height:1px;background:#d4d4d4"></div>
<div class="a" style="left:35px;top:644px;width:1859px;height:1px;background:#d4d4d4"></div>
<div class="a" style="left:35px;top:668px;width:1859px;height:1px;background:#d4d4d4"></div>
<div class="a" style="left:35px;top:692px;width:1859px;height:1px;background:#d4d4d4"></div>
<div class="a" style="left:35px;top:716px;width:1859px;height:1px;background:#d4d4d4"></div>
<div class="a" style="left:35px;top:740px;width:1859px;height:1px;background:#d4d4d4"></div>
<div class="a" style="left:35px;top:764px;width:1859px;height:1px;background:#d4d4d4"></div>
<div class="a" style="left:35px;top:788px;width:1859px;height:1px;background:#d4d4d4"></div>
<div class="a" style="left:35px;top:812px;width:1859px;height:1px;background:#d4d4d4"></div>
<div class="a" style="left:35px;top:836px;width:1859px;height:1px;background:#d4d4d4"></div>
<div class="a" style="left:35px;top:860px;width:1859px;height:1px;background:#d4d4d4"></div>
<div class="a" style="left:35px;top:884px;width:1859px;height:1px;background:#d4d4d4"></div>
<div class="a" style="left:35px;top:908px;width:1859px;height:1px;background:#d4d4d4"></div>
<div class="a" style="left:35px;top:932px;width:1859px;height:1px;background:#d4d4d4"></div>
<div class="a" style="left:35px;top:956px;width:1859px;height:1px;background:#d4d4d4"></div>
<div class="a" style="left:34px;top:261px;width:1px;height:703px;background:#ababab"></div>
<div class="hd" style="left:1px;top:266px;width:34px;color:#217346">1</div>
<div class="a" style="left:0;top:284px;width:34px;height:1px;background:#c8c8c8"></div>
<div class="hd" style="left:1px;top:290px;width:34px;">2</div>
<div class="a" style="left:0;top:308px;width:34px;height:1px;background:#c8c8c8"></div>
<div class="hd" style="left:1px;top:314px;width:34px;">3</div>
<div class="a" style="left:0;top:332px;width:34px;height:1px;background:#c8c8c8"></div>
<div class="hd" style="left:1px;top:338px;width:34px;">4</div>
<div class="a" style="left:0;top:356px;width:34px;height:1px;background:#c8c8c8"></div>
<div class="hd" style="left:1px;top:362px;width:34px;">5</div>
<div class="a" style="left:0;top:380px;width:34px;height:1px;background:#c8c8c8"></div>
<div class="hd" style="left:1px;top:386px;width:34px;">6</div>
<div class="a" style="left:0;top:404px;width:34px;height:1px;background:#c8c8c8"></div>
<div class="hd" style="left:1px;top:410px;width:34px;">7</div>
<div class="a" style="left:0;top:428px;width:34px;height:1px;background:#c8c8c8"></div>
<div class="hd" style="left:1px;top:434px;width:34px;">8</div>
<div class="a" style="left:0;top:452px;width:34px;height:1px;background:#c8c8c8"></div>
<div class="hd" style="left:1px;top:458px;width:34px;">9</div>
<div class="a" style="left:0;top:476px;width:34px;height:1px;background:#c8c8c8"></div>
<div class="hd" style="left:1px;top:482px;width:34px;">10</div>
<div class="a" style="left:0;top:500px;width:34px;height:1px;background:#c8c8c8"></div>
<div class="hd" style="left:1px;top:506px;width:34px;">11</div>
<div class="a" style="left:0;top:524px;width:34px;height:1px;background:#c8c8c8"></div>
<div class="hd" style="left:1px;top:530px;width:34px;">12</div>
<div class="a" style="left:0;top:548px;width:34px;height:1px;background:#c8c8c8"></div>
<div class="hd" style="left:1px;top:554px;width:34px;">13</div>
<div class="a" style="left:0;top:572px;width:34px;height:1px;background:#c8c8c8"></div>
<div class="hd" style="left:1px;top:578px;width:34px;">14</div>
<div class="a" style="left:0;top:596px;width:34px;height:1px;background:#c8c8c8"></div>
<div class="hd" style="left:1px;top:602px;width:34px;">15</div>
<div class="a" style="left:0;top:620px;width:34px;height:1px;background:#c8c8c8"></div>
<div class="hd" style="left:1px;top:626px;width:34px;">16</div>
<div class="a" style="left:0;top:644px;width:34px;height:1px;background:#c8c8c8"></div>
<div class="hd" style="left:1px;top:650px;width:34px;">17</div>
<div class="a" style="left:0;top:668px;width:34px;height:1px;background:#c8c8c8"></div>
<div class="hd" style="left:1px;top:674px;width:34px;">18</div>
<div class="a" style="left:0;top:692px;width:34px;height:1px;background:#c8c8c8"></div>
<div class="hd" style="left:1px;top:698px;width:34px;">19</div>
<div class="a" style="left:0;top:716px;width:34px;height:1px;background:#c8c8c8"></div>
<div class="hd" style="left:1px;top:722px;width:34px;">20</div>
<div class="a" style="left:0;top:740px;width:34px;height:1px;background:#c8c8c8"></div>
<div class="hd" style="left:1px;top:746px;width:34px;">21</div>
<div class="a" style="left:0;top:764px;width:34px;height:1px;background:#c8c8c8"></div>
<div class="hd" style="left:1px;top:770px;width:34px;">22</div>
<div class="a" style="left:0;top:788px;width:34px;height:1px;background:#c8c8c8"></div>
<div class="hd" style="left:1px;top:794px;width:34px;">23</div>
<div class="a" style="left:0;top:812px;width:34px;height:1px;background:#c8c8c8"></div>
<div class="hd" style="left:1px;top:818px;width:34px;">24</div>
<div class="a" style="left:0;top:836px;width:34px;height:1px;background:#c8c8c8"></div>
<div class="hd" style="left:1px;top:842px;width:34px;">25</div>
<div class="a" style="left:0;top:860px;width:34px;height:1px;background:#c8c8c8"></div>
<div class="hd" style="left:1px;top:866px;width:34px;">26</div>
<div class="a" style="left:0;top:884px;width:34px;height:1px;background:#c8c8c8"></div>
<div class="hd" style="left:1px;top:890px;width:34px;">27</div>
<div class="a" style="left:0;top:908px;width:34px;height:1px;background:#c8c8c8"></div>
<div class="hd" style="left:1px;top:914px;width:34px;">28</div>
<div class="a" style="left:0;top:932px;width:34px;height:1px;background:#c8c8c8"></div>
<div class="hd" style="left:1px;top:938px;width:34px;">29</div>
<div class="a" style="left:0;top:956px;width:34px;height:1px;background:#c8c8c8"></div>
<div class="hd" style="left:1px;top:962px;width:34px;">30</div>
<svg width="20" height="18" style="left:14px;top:241px" viewBox="0 0 20 18"><path d="M1 16 H17 V0 Z" fill="#b4b4b4"/></svg>
<div class="cell l" style="left:35px;top:261px;width:79px">image_id</div>
<div class="cell l" style="left:115px;top:261px;width:79px">label</div>
<div class="cell l" style="left:195px;top:261px;width:79px">fold</div>
<div class="cell r" style="left:275px;top:261px;width:79px">0</div>
<div class="cell r" style="left:355px;top:261px;width:79px">1</div>
<div class="cell r" style="left:435px;top:261px;width:79px">2</div>
<div class="cell r" style="left:515px;top:261px;width:79px">3</div>
<div class="cell r" style="left:595px;top:261px;width:79px">4</div>
<div class="cell l" style="left:675px;top:261px;width:79px">preds</div>
<div class="cell l" style="left:35px;top:285px;width:79px">100132032</div>
<div class="cell r" style="left:115px;top:285px;width:79px">0</div>
<div class="cell r" style="left:195px;top:285px;width:79px">0</div>
<div class="cell r" style="left:275px;top:285px;width:79px">0.407877</div>
<div class="cell r" style="left:355px;top:285px;width:79px">0.099298</div>
<div class="cell r" style="left:435px;top:285px;width:79px">0.000408</div>
<div class="cell r" style="left:515px;top:285px;width:79px">0.005005</div>
<div class="cell r" style="left:595px;top:285px;width:79px">0.487413</div>
<div class="cell r" style="left:675px;top:285px;width:79px">4</div>
<div class="cell l" style="left:35px;top:309px;width:79px">100172373</div>
<div class="cell r" style="left:115px;top:309px;width:79px">4</div>
<div class="cell r" style="left:195px;top:309px;width:79px">0</div>
<div class="cell r" style="left:275px;top:309px;width:79px">0.954686</div>
<div class="cell r" style="left:355px;top:309px;width:79px">0.014004</div>
<div class="cell r" style="left:435px;top:309px;width:79px">0.000984</div>
<div class="cell r" style="left:515px;top:309px;width:79px">0.001446</div>
<div class="cell r" style="left:595px;top:309px;width:79px">0.02888</div>
<div class="cell r" style="left:675px;top:309px;width:79px">0</div>
<div class="cell l" style="left:35px;top:333px;width:79px">100174911</div>
<div class="cell r" style="left:115px;top:333px;width:79px">3</div>
<div class="cell r" style="left:195px;top:333px;width:79px">0</div>
<div class="cell r" style="left:275px;top:333px;width:79px">5.40E-05</div>
<div class="cell r" style="left:355px;top:333px;width:79px">0.000909</div>
<div class="cell r" style="left:435px;top:333px;width:79px">0.001742</div>
<div class="cell r" style="left:515px;top:333px;width:79px">0.995447</div>
<div class="cell r" style="left:595px;top:333px;width:79px">0.001848</div>
<div class="cell r" style="left:675px;top:333px;width:79px">3</div>
<div class="cell l" style="left:35px;top:357px;width:79px">100225531</div>
<div class="cell r" style="left:115px;top:357px;width:79px">3</div>
<div class="cell r" style="left:195px;top:357px;width:79px">0</div>
<div class="cell r" style="left:275px;top:357px;width:79px">2.05E-05</div>
<div class="cell r" style="left:355px;top:357px;width:79px">0.000131</div>
<div class="cell r" style="left:435px;top:357px;width:79px">0.001301</div>
<div class="cell r" style="left:515px;top:357px;width:79px">0.996</div>
<div class="cell r" style="left:595px;top:357px;width:79px">0.002548</div>
<div class="cell r" style="left:675px;top:357px;width:79px">3</div>
<div class="cell l" style="left:35px;top:381px;width:79px">100410556</div>
<div class="cell r" style="left:115px;top:381px;width:79px">3</div>
<div class="cell r" style="left:195px;top:381px;width:79px">0</div>
<div class="cell r" style="left:275px;top:381px;width:79px">0.000261</div>
<div class="cell r" style="left:355px;top:381px;width:79px">0.000609</div>
<div class="cell r" style="left:435px;top:381px;width:79px">0.000541</div>
<div class="cell r" style="left:515px;top:381px;width:79px">0.995839</div>
<div class="cell r" style="left:595px;top:381px;width:79px">0.00275</div>
<div class="cell r" style="left:675px;top:381px;width:79px">3</div>
<div class="cell l" style="left:35px;top:405px;width:79px">100482651</div>
<div class="cell r" style="left:115px;top:405px;width:79px">2</div>
<div class="cell r" style="left:195px;top:405px;width:79px">0</div>
<div class="cell r" style="left:275px;top:405px;width:79px">0.001625</div>
<div class="cell r" style="left:355px;top:405px;width:79px">0.060891</div>
<div class="cell r" style="left:435px;top:405px;width:79px">0.3906</div>
<div class="cell r" style="left:515px;top:405px;width:79px">0.544139</div>
<div class="cell r" style="left:595px;top:405px;width:79px">0.002744</div>
<div class="cell r" style="left:675px;top:405px;width:79px">3</div>
<div class="cell l" style="left:35px;top:429px;width:79px">100488126</div>
<div class="cell r" style="left:115px;top:429px;width:79px">3</div>
<div class="cell r" style="left:195px;top:429px;width:79px">0</div>
<div class="cell r" style="left:275px;top:429px;width:79px">0.000194</div>
<div class="cell r" style="left:355px;top:429px;width:79px">0.001341</div>
<div class="cell r" style="left:435px;top:429px;width:79px">0.079976</div>
<div class="cell r" style="left:515px;top:429px;width:79px">0.913509</div>
<div class="cell r" style="left:595px;top:429px;width:79px">0.004979</div>
<div class="cell r" style="left:675px;top:429px;width:79px">3</div>
<div class="cell l" style="left:35px;top:453px;width:79px">100533489</div>
<div class="cell r" style="left:115px;top:453px;width:79px">2</div>
<div class="cell r" style="left:195px;top:453px;width:79px">0</div>
<div class="cell r" style="left:275px;top:453px;width:79px">0.141487</div>
<div class="cell r" style="left:355px;top:453px;width:79px">0.201512</div>
<div class="cell r" style="left:435px;top:453px;width:79px">0.448999</div>
<div class="cell r" style="left:515px;top:453px;width:79px">0.099326</div>
<div class="cell r" style="left:595px;top:453px;width:79px">0.108675</div>
<div class="cell r" style="left:675px;top:453px;width:79px">2</div>
<div class="cell l" style="left:35px;top:477px;width:79px">100560400</div>
<div class="cell r" style="left:115px;top:477px;width:79px">4</div>
<div class="cell r" style="left:195px;top:477px;width:79px">0</div>
<div class="cell r" style="left:275px;top:477px;width:79px">0.001716</div>
<div class="cell r" style="left:355px;top:477px;width:79px">0.000663</div>
<div class="cell r" style="left:435px;top:477px;width:79px">0.086225</div>
<div class="cell r" style="left:515px;top:477px;width:79px">0.096677</div>
<div class="cell r" style="left:595px;top:477px;width:79px">0.814719</div>
<div class="cell r" style="left:675px;top:477px;width:79px">4</div>
<div class="cell l" style="left:35px;top:501px;width:79px">100770062</div>
<div class="cell r" style="left:115px;top:501px;width:79px">3</div>
<div class="cell r" style="left:195px;top:501px;width:79px">0</div>
<div class="cell r" style="left:275px;top:501px;width:79px">1.69E-05</div>
<div class="cell r" style="left:355px;top:501px;width:79px">3.04E-06</div>
<div class="cell r" style="left:435px;top:501px;width:79px">2.87E-05</div>
<div class="cell r" style="left:515px;top:501px;width:79px">0.999946</div>
<div class="cell r" style="left:595px;top:501px;width:79px">5.57E-06</div>
<div class="cell r" style="left:675px;top:501px;width:79px">3</div>
<div class="cell l" style="left:35px;top:525px;width:79px">100853231</div>
<div class="cell r" style="left:115px;top:525px;width:79px">3</div>
<div class="cell r" style="left:195px;top:525px;width:79px">0</div>
<div class="cell r" style="left:275px;top:525px;width:79px">0.00123</div>
<div class="cell r" style="left:355px;top:525px;width:79px">0.003612</div>
<div class="cell r" style="left:435px;top:525px;width:79px">0.004596</div>
<div class="cell r" style="left:515px;top:525px;width:79px">0.990185</div>
<div class="cell r" style="left:595px;top:525px;width:79px">0.000377</div>
<div class="cell r" style="left:675px;top:525px;width:79px">3</div>
<div class="cell l" style="left:35px;top:549px;width:79px">100948970</div>
<div class="cell r" style="left:115px;top:549px;width:79px">3</div>
<div class="cell r" style="left:195px;top:549px;width:79px">0</div>
<div class="cell r" style="left:275px;top:549px;width:79px">4.20E-05</div>
<div class="cell r" style="left:355px;top:549px;width:79px">0.000324</div>
<div class="cell r" style="left:435px;top:549px;width:79px">0.016175</div>
<div class="cell r" style="left:515px;top:549px;width:79px">0.980853</div>
<div class="cell r" style="left:595px;top:549px;width:79px">0.002606</div>
<div class="cell r" style="left:675px;top:549px;width:79px">3</div>
<div class="cell l" style="left:35px;top:573px;width:79px">101157161</div>
<div class="cell r" style="left:115px;top:573px;width:79px">4</div>
<div class="cell r" style="left:195px;top:573px;width:79px">0</div>
<div class="cell r" style="left:275px;top:573px;width:79px">0.031879</div>
<div class="cell r" style="left:355px;top:573px;width:79px">0.757006</div>
<div class="cell r" style="left:435px;top:573px;width:79px">0.018542</div>
<div class="cell r" style="left:515px;top:573px;width:79px">0.01256</div>
<div class="cell r" style="left:595px;top:573px;width:79px">0.180013</div>
<div class="cell r" style="left:675px;top:573px;width:79px">1</div>
<div class="cell l" style="left:35px;top:597px;width:79px">101230501</div>
<div class="cell r" style="left:115px;top:597px;width:79px">1</div>
<div class="cell r" style="left:195px;top:597px;width:79px">0</div>
<div class="cell r" style="left:275px;top:597px;width:79px">0.80067</div>
<div class="cell r" style="left:355px;top:597px;width:79px">0.116622</div>
<div class="cell r" style="left:435px;top:597px;width:79px">0.014206</div>
<div class="cell r" style="left:515px;top:597px;width:79px">0.002827</div>
<div class="cell r" style="left:595px;top:597px;width:79px">0.065675</div>
<div class="cell r" style="left:675px;top:597px;width:79px">0</div>
<div class="cell l" style="left:35px;top:621px;width:79px">101253257</div>
<div class="cell r" style="left:115px;top:621px;width:79px">1</div>
<div class="cell r" style="left:195px;top:621px;width:79px">0</div>
<div class="cell r" style="left:275px;top:621px;width:79px">0.001462</div>
<div class="cell r" style="left:355px;top:621px;width:79px">0.062938</div>
<div class="cell r" style="left:435px;top:621px;width:79px">0.001757</div>
<div class="cell r" style="left:515px;top:621px;width:79px">0.928405</div>
<div class="cell r" style="left:595px;top:621px;width:79px">0.005438</div>
<div class="cell r" style="left:675px;top:621px;width:79px">3</div>
<div class="cell l" style="left:35px;top:645px;width:79px">101275527</div>
<div class="cell r" style="left:115px;top:645px;width:79px">3</div>
<div class="cell r" style="left:195px;top:645px;width:79px">0</div>
<div class="cell r" style="left:275px;top:645px;width:79px">1.91E-06</div>
<div class="cell r" style="left:355px;top:645px;width:79px">3.14E-07</div>
<div class="cell r" style="left:435px;top:645px;width:79px">4.01E-06</div>
<div class="cell r" style="left:515px;top:645px;width:79px">0.99999</div>
<div class="cell r" style="left:595px;top:645px;width:79px">4.12E-06</div>
<div class="cell r" style="left:675px;top:645px;width:79px">3</div>
<div class="cell l" style="left:35px;top:669px;width:79px">101373437</div>
<div class="cell r" style="left:115px;top:669px;width:79px">3</div>
<div class="cell r" style="left:195px;top:669px;width:79px">0</div>
<div class="cell r" style="left:275px;top:669px;width:79px">6.69E-05</div>
<div class="cell r" style="left:355px;top:669px;width:79px">2.09E-05</div>
<div class="cell r" style="left:435px;top:669px;width:79px">0.000232</div>
<div class="cell r" style="left:515px;top:669px;width:79px">0.999043</div>
<div class="cell r" style="left:595px;top:669px;width:79px">0.000637</div>
<div class="cell r" style="left:675px;top:669px;width:79px">3</div>
<div class="cell l" style="left:35px;top:693px;width:79px">101408708</div>
<div class="cell r" style="left:115px;top:693px;width:79px">3</div>
<div class="cell r" style="left:195px;top:693px;width:79px">0</div>
<div class="cell r" style="left:275px;top:693px;width:79px">9.86E-05</div>
<div class="cell r" style="left:355px;top:693px;width:79px">0.000467</div>
<div class="cell r" style="left:435px;top:693px;width:79px">0.002464</div>
<div class="cell r" style="left:515px;top:693px;width:79px">0.996609</div>
<div class="cell r" style="left:595px;top:693px;width:79px">0.000361</div>
<div class="cell r" style="left:675px;top:693px;width:79px">3</div>
<div class="cell l" style="left:35px;top:717px;width:79px">101488861</div>
<div class="cell r" style="left:115px;top:717px;width:79px">3</div>
<div class="cell r" style="left:195px;top:717px;width:79px">0</div>
<div class="cell r" style="left:275px;top:717px;width:79px">4.10E-05</div>
<div class="cell r" style="left:355px;top:717px;width:79px">0.000304</div>
<div class="cell r" style="left:435px;top:717px;width:79px">0.234684</div>
<div class="cell r" style="left:515px;top:717px;width:79px">0.76401</div>
<div class="cell r" style="left:595px;top:717px;width:79px">0.000961</div>
<div class="cell r" style="left:675px;top:717px;width:79px">3</div>
<div class="cell l" style="left:35px;top:741px;width:79px">101602737</div>
<div class="cell r" style="left:115px;top:741px;width:79px">1</div>
<div class="cell r" style="left:195px;top:741px;width:79px">0</div>
<div class="cell r" style="left:275px;top:741px;width:79px">0.050143</div>
<div class="cell r" style="left:355px;top:741px;width:79px">0.185785</div>
<div class="cell r" style="left:435px;top:741px;width:79px">0.005238</div>
<div class="cell r" style="left:515px;top:741px;width:79px">0.003675</div>
<div class="cell r" style="left:595px;top:741px;width:79px">0.755161</div>
<div class="cell r" style="left:675px;top:741px;width:79px">4</div>
<div class="cell l" style="left:35px;top:765px;width:79px">101641526</div>
<div class="cell r" style="left:115px;top:765px;width:79px">1</div>
<div class="cell r" style="left:195px;top:765px;width:79px">0</div>
<div class="cell r" style="left:275px;top:765px;width:79px">0.006998</div>
<div class="cell r" style="left:355px;top:765px;width:79px">0.965774</div>
<div class="cell r" style="left:435px;top:765px;width:79px">0.008725</div>
<div class="cell r" style="left:515px;top:765px;width:79px">0.002226</div>
<div class="cell r" style="left:595px;top:765px;width:79px">0.016276</div>
<div class="cell r" style="left:675px;top:765px;width:79px">1</div>
<div class="cell l" style="left:35px;top:789px;width:79px">101789022</div>
<div class="cell r" style="left:115px;top:789px;width:79px">3</div>
<div class="cell r" style="left:195px;top:789px;width:79px">0</div>
<div class="cell r" style="left:275px;top:789px;width:79px">4.97E-05</div>
<div class="cell r" style="left:355px;top:789px;width:79px">2.59E-05</div>
<div class="cell r" style="left:435px;top:789px;width:79px">4.73E-05</div>
<div class="cell r" style="left:515px;top:789px;width:79px">0.998463</div>
<div class="cell r" style="left:595px;top:789px;width:79px">0.001414</div>
<div class="cell r" style="left:675px;top:789px;width:79px">3</div>
<div class="cell l" style="left:35px;top:813px;width:79px">101845074</div>
<div class="cell r" style="left:115px;top:813px;width:79px">1</div>
<div class="cell r" style="left:195px;top:813px;width:79px">0</div>
<div class="cell r" style="left:275px;top:813px;width:79px">1.27E-06</div>
<div class="cell r" style="left:355px;top:813px;width:79px">0.999924</div>
<div class="cell r" style="left:435px;top:813px;width:79px">1.37E-05</div>
<div class="cell r" style="left:515px;top:813px;width:79px">5.58E-05</div>
<div class="cell r" style="left:595px;top:813px;width:79px">5.52E-06</div>
<div class="cell r" style="left:675px;top:813px;width:79px">1</div>
<div class="cell l" style="left:35px;top:837px;width:79px">101939823</div>
<div class="cell r" style="left:115px;top:837px;width:79px">4</div>
<div class="cell r" style="left:195px;top:837px;width:79px">0</div>
<div class="cell r" style="left:275px;top:837px;width:79px">0.003862</div>
<div class="cell r" style="left:355px;top:837px;width:79px">0.001396</div>
<div class="cell r" style="left:435px;top:837px;width:79px">0.165483</div>
<div class="cell r" style="left:515px;top:837px;width:79px">0.000122</div>
<div class="cell r" style="left:595px;top:837px;width:79px">0.829137</div>
<div class="cell r" style="left:675px;top:837px;width:79px">4</div>
<div class="cell l" style="left:35px;top:861px;width:79px">101960837</div>
<div class="cell r" style="left:115px;top:861px;width:79px">3</div>
<div class="cell r" style="left:195px;top:861px;width:79px">0</div>
<div class="cell r" style="left:275px;top:861px;width:79px">2.19E-05</div>
<div class="cell r" style="left:355px;top:861px;width:79px">1.83E-05</div>
<div class="cell r" style="left:435px;top:861px;width:79px">1.28E-05</div>
<div class="cell r" style="left:515px;top:861px;width:79px">0.999924</div>
<div class="cell r" style="left:595px;top:861px;width:79px">2.28E-05</div>
<div class="cell r" style="left:675px;top:861px;width:79px">3</div>
<div class="cell l" style="left:35px;top:885px;width:79px">102039365</div>
<div class="cell r" style="left:115px;top:885px;width:79px">0</div>
<div class="cell r" style="left:195px;top:885px;width:79px">0</div>
<div class="cell r" style="left:275px;top:885px;width:79px">0.013238</div>
<div class="cell r" style="left:355px;top:885px;width:79px">0.001492</div>
<div class="cell r" style="left:435px;top:885px;width:79px">0.022152</div>
<div class="cell r" style="left:515px;top:885px;width:79px">0.003617</div>
<div class="cell r" style="left:595px;top:885px;width:79px">0.959501</div>
<div class="cell r" style="left:675px;top:885px;width:79px">4</div>
<div class="cell l" style="left:35px;top:909px;width:79px">102450418</div>
<div class="cell r" style="left:115px;top:909px;width:79px">1</div>
<div class="cell r" style="left:195px;top:909px;width:79px">0</div>
<div class="cell r" style="left:275px;top:909px;width:79px">0.004852</div>
<div class="cell r" style="left:355px;top:909px;width:79px">0.834102</div>
<div class="cell r" style="left:435px;top:909px;width:79px">0.001719</div>
<div class="cell r" style="left:515px;top:909px;width:79px">0.003592</div>
<div class="cell r" style="left:595px;top:909px;width:79px">0.155735</div>
<div class="cell r" style="left:675px;top:909px;width:79px">1</div>
<div class="cell l" style="left:35px;top:933px;width:79px">102546643</div>
<div class="cell r" style="left:115px;top:933px;width:79px">2</div>
<div class="cell r" style="left:195px;top:933px;width:79px">0</div>
<div class="cell r" style="left:275px;top:933px;width:79px">0.000169</div>
<div class="cell r" style="left:355px;top:933px;width:79px">0.000574</div>
<div class="cell r" style="left:435px;top:933px;width:79px">0.995944</div>
<div class="cell r" style="left:515px;top:933px;width:79px">0.003114</div>
<div class="cell r" style="left:595px;top:933px;width:79px">0.000199</div>
<div class="cell r" style="left:675px;top:933px;width:79px">2</div>
<div class="a" style="left:33px;top:259px;width:83px;height:27px;border:2px solid #217346"></div>
<div class="a" style="left:111px;top:281px;width:7px;height:7px;background:#217346;border:1px solid #fff"></div>
<div class="a" style="left:1898px;top:278px;width:18px;height:668px;background:#dcdcdc"></div>
<div class="a" style="left:1898px;top:239px;width:19px;height:19px;background:#fff;border:1px solid #d6d6d6"></div>
<svg width="10" height="6" style="left:1902px;top:245px" viewBox="0 0 10 6"><path d="M0 6 H10 L5 0 Z" fill="#6d6d6d"/></svg>
<div class="a" style="left:1898px;top:258px;width:19px;height:21px;background:#fff;border:1px solid #bcbcbc"></div>
<div class="a" style="left:1898px;top:946px;width:19px;height:18px;background:#fff;border:1px solid #d6d6d6"></div>
<svg width="10" height="6" style="left:1902px;top:952px" viewBox="0 0 10 6"><path d="M0 0 H10 L5 6 Z" fill="#6d6d6d"/></svg>
<div class="a" style="left:0;top:964px;width:1920px;height:30px;background:#e6e6e6;border-top:1px solid #a0a0a0;border-bottom:1px solid #b8b8b8"></div>
<svg width="6" height="10" style="left:28px;top:974px" viewBox="0 0 6 10"><path d="M6 0 V10 L0 5 Z" fill="#c8c8c8"/></svg>
<svg width="6" height="10" style="left:56px;top:974px" viewBox="0 0 6 10"><path d="M0 0 V10 L6 5 Z" fill="#b8b8b8"/></svg>
<div class="a" style="left:103px;top:964px;width:103px;height:26px;background:#fff;border-left:1px solid #ababab;border-right:1px solid #ababab;border-bottom:2px solid #217346"></div>
<div class="t" style="left:116.00px;top:968px;font-size:16px;color:#217346;font-weight:bold;transform:scaleX(1.0685);transform-origin:0 0;">oof_df (1)</div>
<svg width="22" height="22" style="left:238px;top:968px" viewBox="0 0 22 22"><circle cx="11" cy="11" r="9.5" fill="none" stroke="#6d6d6d" stroke-width="1.3"/><path d="M11 5.5 V16.5 M5.5 11 H16.5" stroke="#6d6d6d" stroke-width="1.6"/></svg>
<svg width="4" height="14" style="left:1149px;top:972px" viewBox="0 0 4 14"><rect x="0" y="0" width="3" height="3" fill="#b0b0b0"/><rect x="0" y="5" width="3" height="3" fill="#b0b0b0"/><rect x="0" y="10" width="3" height="3" fill="#b0b0b0"/></svg>
<div class="a" style="left:1167px;top:969px;width:728px;height:19px;background:#dcdcdc;border:1px solid #d0d0d0"></div>
<div class="a" style="left:1167px;top:969px;width:19px;height:19px;background:#fff;border:1px solid #d6d6d6"></div>
<svg width="6" height="10" style="left:1173px;top:974px" viewBox="0 0 6 10"><path d="M6 0 V10 L0 5 Z" fill="#6d6d6d"/></svg>
<div class="a" style="left:1186px;top:969px;width:660px;height:19px;background:#fff;border:1px solid #bcbcbc"></div>
<div class="a" style="left:1876px;top:969px;width:19px;height:19px;background:#fff;border:1px solid #d6d6d6"></div>
<svg width="6" height="10" style="left:1883px;top:974px" viewBox="0 0 6 10"><path d="M0 0 V10 L6 5 Z" fill="#6d6d6d"/></svg>
<div class="a" style="left:0;top:994px;width:1920px;height:26px;background:#f1f1f1"></div>
<div class="t" style="left:8.00px;top:1000px;font-size:14px;color:#444;transform:scaleX(0.9000);transform-origin:0 0;">Ready</div>
<div class="a" style="left:1582px;top:994px;width:41px;height:26px;background:#c6c6c6"></div>
<svg width="14" height="14" style="left:1595px;top:999px" viewBox="0 0 14 14"><path d="M0 0.75 H13.5 M0 4.75 H13.5 M0 8.75 H13.5 M0 12.75 H13.5 M0.75 0 V13.5 M4.75 0 V13.5 M8.75 0 V13.5 M12.75 0 V13.5" stroke="#707070" stroke-width="1.5"/></svg>
<svg width="15" height="14" style="left:1636px;top:999px" viewBox="0 0 15 14"><rect x="0.6" y="0.6" width="13.8" height="12.8" fill="none" stroke="#707070" stroke-width="1.2"/><rect x="3.5" y="2.5" width="8" height="9" fill="none" stroke="#707070"/><path d="M5 5 H10 M5 7 H10 M5 9 H10" stroke="#707070"/></svg>
<svg width="15" height="14" style="left:1677px;top:999px" viewBox="0 0 15 14"><rect x="0.6" y="0.6" width="13.8" height="12.8" fill="none" stroke="#707070" stroke-width="1.2"/><path d="M0.6 8.5 H9.5 V0.6 M4.5 0.6 V5" fill="none" stroke="#707070" stroke-width="1.2"/></svg>
<div class="a" style="left:1710px;top:1006px;width:9px;height:2px;background:#666"></div>
<div class="a" style="left:1723px;top:1006px;width:124px;height:1px;background:#a0a0a0"></div>
<div class="a" style="left:1783px;top:999px;width:5px;height:14px;background:#666;border-radius:1px"></div>
<div class="a" style="left:1852px;top:1006px;width:12px;height:2px;background:#666"></div>
<div class="a" style="left:1857px;top:1000px;width:2px;height:12px;background:#666"></div>
<div class="t" style="left:1881.00px;top:1001px;font-size:13px;color:#555;transform:scaleX(0.8824);transform-origin:0 0;">100%</div>
<div class="a" style="left:0;top:1020px;width:1920px;height:60px;background:linear-gradient(90deg,#1e1f22 0px,#1e1f22 220px,#38182a 265px,#2a1c26 320px,#231c20 360px,#3a1824 420px,#2c1a30 470px,#221d2e 550px,#1f1e24 620px,#1e1d22 940px,#221b1e 1100px,#3a1414 1140px,#3a1416 1217px,#321618 1266px,#251c1f 1330px,#1f1e22 1450px,#211d22 1620px,#2a1c25 1750px,#2e1b28 1850px,#3f1a33 1920px)"></div>
<svg width="34" height="24" style="left:24px;top:1038px" viewBox="0 0 34 24"><defs><linearGradient id="cl" x1="0" y1="0" x2="0" y2="1"><stop offset="0" stop-color="#cfe6fb"/><stop offset="1" stop-color="#8ec2f0"/></linearGradient></defs><path d="M7 22 Q1 22 1 16.5 Q1 11 7 11 Q8 3 16 3 Q23 3 25 9 Q33 9 33 16 Q33 22 27 22 Z" fill="url(#cl)"/></svg>
<div class="t" style="left:66.00px;top:1033px;font-size:15px;color:#fff;transform:scaleX(0.9062);transform-origin:0 0;">79°F</div>
<div class="t" style="left:66.00px;top:1053px;font-size:15px;color:#dcdcdc;">Cloudy</div>
<svg width="30" height="30" style="left:616px;top:1036px" viewBox="0 0 30 30"><defs><linearGradient id="wg" x1="0" y1="0" x2="1" y2="1"><stop offset="0" stop-color="#8fdcfb"/><stop offset="1" stop-color="#0f98f0"/></linearGradient></defs>
<path d="M2 0 H14 V14 H0 V2 Q0 0 2 0 Z" fill="url(#wg)"/><path d="M15 0 H27 Q29 0 29 2 V14 H15 Z" fill="url(#wg)"/><path d="M0 15 H14 V29 H2 Q0 29 0 27 Z" fill="url(#wg)"/><path d="M15 15 H29 V27 Q29 29 27 29 H15 Z" fill="url(#wg)"/></svg>
<svg width="32" height="32" style="left:670px;top:1034px" viewBox="0 0 32 32"><defs><linearGradient id="sg" x1="0" y1="0" x2="1" y2="1"><stop offset="0" stop-color="#b5e6fb"/><stop offset="1" stop-color="#1e8ee6"/></linearGradient></defs><circle cx="14.5" cy="14.5" r="11.8" fill="#1c1b22" stroke="#7fc3e6" stroke-width="3"/><circle cx="14.5" cy="14.5" r="9" fill="url(#sg)"/><path d="M5.5 14.5 H23.5 M6.5 10.5 H22.5 M6.5 18.5 H22.5 M14.5 5.5 V23.5" stroke="#5fb4e8" stroke-width="0.8"/><ellipse cx="14.5" cy="14.5" rx="4" ry="9" fill="none" stroke="#5fb4e8" stroke-width="0.8"/><path d="M23 23 L29.5 29.5" stroke="#7fc3e6" stroke-width="3" stroke-linecap="round"/></svg>
<svg width="32" height="30" style="left:726px;top:1036px" viewBox="0 0 32 30"><defs><linearGradient id="tv1" x1="0" y1="0" x2="1" y2="1"><stop offset="0" stop-color="#ffffff"/><stop offset="1" stop-color="#dcdcdc"/></linearGradient></defs><rect x="7" y="0" width="23" height="20" rx="2" fill="url(#tv1)"/><rect x="0" y="8" width="22" height="20" rx="2" fill="#6a6a6a" opacity="0.88"/><rect x="7" y="8" width="15" height="12" fill="#b4b4b4"/></svg>
<svg width="30" height="30" style="left:781px;top:1035px" viewBox="0 0 30 30"><defs><linearGradient id="tg" x1="0" y1="0" x2="1" y2="1"><stop offset="0" stop-color="#8a7ee0"/><stop offset="1" stop-color="#5a4fc0"/></linearGradient></defs><circle cx="15" cy="14" r="14" fill="url(#tg)"/><path d="M3 22 L1 29 L9 26 Z" fill="#5a4fc0"/><rect x="7" y="9" width="12" height="11" rx="2" fill="#fff"/><path d="M19 12 L23 9.5 V19.5 L19 17 Z" fill="#fff"/></svg>
<svg width="32" height="30" style="left:835px;top:1035px" viewBox="0 0 32 30"><path d="M0 3 Q0 1 2 1 H11 L14 4 H30 Q31 4 31 6 V28 H0 Z" fill="#e8a820"/><rect x="0" y="6" width="31" height="22" rx="1" fill="#fcd35c"/><rect x="6" y="19" width="19" height="10" rx="2" fill="#1f7fd8"/><rect x="10" y="22" width="11" height="2" fill="#9fd0ff"/></svg>
<div class="a" style="left:846px;top:1071px;width:10px;height:3px;border-radius:2px;background:#9a9a9a"></div>
<svg width="30" height="30" style="left:891px;top:1035px" viewBox="0 0 30 30"><rect x="0" y="0" width="30" height="30" rx="1" fill="#107c10"/><circle cx="15" cy="15" r="12" fill="#fff"/><path d="M7 6 Q15 10 23 24 M23 6 Q15 10 7 24" stroke="#107c10" stroke-width="3.5" fill="none"/></svg>
<svg width="31" height="31" style="left:946px;top:1035px" viewBox="0 0 31 31"><defs><linearGradient id="eg" x1="0" y1="0" x2="1" y2="0.3"><stop offset="0" stop-color="#1592e6"/><stop offset="0.55" stop-color="#2ab8e0"/><stop offset="1" stop-color="#6be05a"/></linearGradient><linearGradient id="eg2" x1="0" y1="0" x2="0" y2="1"><stop offset="0" stop-color="#1d8fe0"/><stop offset="1" stop-color="#0a5fb8"/></linearGradient></defs>
<path d="M15.5 0.5 Q28 0.5 30.5 13 Q31 21 25 22 Q20 22.5 18 21 Q22 19 21 16 Q19.5 12 15 12 Q7 12 3.5 19 Q1 25 3 27 Q0 23 0.5 15 Q2 0.5 15.5 0.5 Z" fill="url(#eg)"/>
<path d="M15 12 Q19.5 12 21 16 Q22 19 18 21 Q13 21 12.5 17 Q12.5 13.5 15 12 Z" fill="#1c1b22"/>
<path d="M3.5 19 Q7 12 15 12 Q12.5 13.5 12.5 17 Q13 24 21 25.5 Q25 26 28 23.5 Q24 30.5 15.5 30.5 Q5 30.5 3 27 Q1 25 3.5 19 Z" fill="url(#eg2)"/>
<path d="M12.5 17 Q13 24 21 25.5 Q16 27 12 24 Q9 21 12.5 17 Z" fill="#0b4c99"/>
</svg>
<svg width="30" height="30" style="left:1001px;top:1035px" viewBox="0 0 30 30"><path d="M9 7 V3 Q9 1 11 1 H19 Q21 1 21 3 V7" fill="none" stroke="#2cc3f0" stroke-width="2.2"/><rect x="0.5" y="5" width="29" height="24.5" rx="3" fill="#f4f4f4"/><rect x="9" y="11" width="5.5" height="5.5" fill="#f25022"/><rect x="15.5" y="11" width="5.5" height="5.5" fill="#7fba00"/><rect x="9" y="17.5" width="5.5" height="5.5" fill="#00a4ef"/><rect x="15.5" y="17.5" width="5.5" height="5.5" fill="#ffb900"/></svg>
<svg width="30" height="30" style="left:1056px;top:1035px" viewBox="0 0 30 30"><defs><linearGradient id="ff" x1="0" y1="0" x2="0" y2="1"><stop offset="0" stop-color="#ffbd2e"/><stop offset="0.5" stop-color="#ff6a2a"/><stop offset="1" stop-color="#e3276a"/></linearGradient></defs><path d="M15 29 Q1 29 1 16 Q1 9 5 5 Q5 10 8 11 Q10 5 16 4 Q14 0 16 0 Q29 5 29 16 Q29 29 15 29 Z" fill="url(#ff)"/><circle cx="14" cy="17" r="7" fill="#7b3fc9"/><path d="M6 13 Q10 10 15 12" fill="none" stroke="#ffa230" stroke-width="2.5"/></svg>
<svg width="31" height="31" style="left:1111px;top:1035px" viewBox="0 0 31 31"><defs><linearGradient id="qa" x1="0" y1="0" x2="1" y2="1"><stop offset="0" stop-color="#b8e0f0"/><stop offset="1" stop-color="#7fc7e8"/></linearGradient></defs><rect x="0" y="0" width="31" height="31" fill="url(#qa)"/><path d="M10 27 V22 Q5 19 5 13 Q5 5 14 5 Q22 5 23 12 L25 16 L23 17 V21 H19 V27" fill="none" stroke="#fff" stroke-width="1.6"/><path d="M10 12 Q10 8 14 8 Q18 8 18 12 Q18 15 16 16 V19 H12 V16 Q10 15 10 12 Z" fill="none" stroke="#fff" stroke-width="1.4"/></svg>
<svg width="32" height="32" style="left:1165px;top:1034px" viewBox="0 0 32 32"><path d="M16 16 L3.01 8.5 A15 15 0 0 1 28.99 8.5 Z" fill="#e33b2e"/><path d="M16 16 L28.99 8.5 A15 15 0 0 1 16 31 Z" fill="#fbc02d"/><path d="M16 16 L16 31 A15 15 0 0 1 3.01 8.5 Z" fill="#2e9e48"/><circle cx="16" cy="16" r="7" fill="#fff"/><circle cx="16" cy="16" r="5.6" fill="#3b7ff0"/></svg>
<svg width="20" height="20" style="left:1182px;top:1028px" viewBox="0 0 20 20"><circle cx="10" cy="10" r="9.5" fill="#1a2a5a"/><path d="M4 6 Q10 2 16 8 Q14 14 9 17 Q7 12 4 6 Z" fill="#7a3a6a"/><circle cx="12" cy="7" r="2.5" fill="#c07070"/></svg>
<div class="a" style="left:1177px;top:1071px;width:9px;height:3px;border-radius:2px;background:#9a9a9a"></div>
<svg width="32" height="32" style="left:1220px;top:1034px" viewBox="0 0 32 32"><path d="M16 16 L3.01 8.5 A15 15 0 0 1 28.99 8.5 Z" fill="#e33b2e"/><path d="M16 16 L28.99 8.5 A15 15 0 0 1 16 31 Z" fill="#fbc02d"/><path d="M16 16 L16 31 A15 15 0 0 1 3.01 8.5 Z" fill="#2e9e48"/><circle cx="16" cy="16" r="7" fill="#fff"/><circle cx="16" cy="16" r="5.6" fill="#3b7ff0"/></svg>
<svg width="20" height="20" style="left:1237px;top:1028px" viewBox="0 0 20 20"><circle cx="10" cy="10" r="9.5" fill="#0d4a3c"/><text x="10" y="13.5" text-anchor="middle" font-family="Liberation Sans" font-size="10" font-weight="bold" fill="#b8d8d0">m</text></svg>
<div class="a" style="left:1232px;top:1071px;width:9px;height:3px;border-radius:2px;background:#9a9a9a"></div>
<div class="a" style="left:1266px;top:1025px;width:50px;height:50px;border-radius:5px;background:#2c2a2f"></div>
<svg width="28" height="28" style="left:1277px;top:1036px" viewBox="0 0 28 28"><rect x="10" y="3" width="17" height="22" fill="#fff" stroke="#1d6f42" stroke-width="1.2"/><path d="M13 7 H25 M13 11 H25 M13 15 H25 M13 19 H25 M18 4 V24" stroke="#1d6f42" stroke-width="0.9"/><path d="M0 4 L16 1.5 V26.5 L0 24 Z" fill="#1d6f42"/><path d="M4 9 L11 19 M11 9 L4 19" stroke="#fff" stroke-width="2.2"/></svg>
<div class="a" style="left:1281px;top:1070px;width:20px;height:4px;border-radius:2px;background:#f08a6c"></div>
<svg width="18" height="10" style="left:1550px;top:1045px" viewBox="0 0 18 10"><path d="M1 9 L9 1 L17 9" fill="none" stroke="#fff" stroke-width="1.3"/></svg>
<svg width="22" height="14" style="left:1578px;top:1043px" viewBox="0 0 22 14"><path d="M4 13 Q0 13 0 9.5 Q0 6 4 6 Q5 1 10 1 Q14 1 16 5 Q21 5 21 9 Q21 13 17 13 Z" fill="#d8d8d8"/></svg>
<svg width="22" height="22" style="left:1608px;top:1039px" viewBox="0 0 22 22"><path d="M3 9 Q5 3 11 3 Q16 3 19 7 M19 2 V7 H14" fill="none" stroke="#fff" stroke-width="1.3"/><path d="M17 14 Q15 19 10 19 Q5 19 3 15 M3 20 V15 H8" fill="none" stroke="#fff" stroke-width="1.3"/><circle cx="16.5" cy="16.5" r="5" fill="#1a73e8"/></svg>
<div class="t" style="left:1648.00px;top:1033px;font-size:15px;color:#fff;transform:scaleX(0.8788);transform-origin:0 0;">ENG</div>
<div class="t" style="left:1653.00px;top:1053px;font-size:15px;color:#fff;transform:scaleX(0.9048);transform-origin:0 0;">US</div>
<svg width="22" height="16" style="left:1698px;top:1042px" viewBox="0 0 22 16"><path d="M1 6 Q11 -2 21 6" fill="none" stroke="#777" stroke-width="1.6"/><path d="M4 9 Q11 3 18 9" fill="none" stroke="#fff" stroke-width="1.8"/><path d="M7 12 Q11 8.5 15 12" fill="none" stroke="#fff" stroke-width="1.8"/><circle cx="11" cy="14.5" r="1.5" fill="#fff"/></svg>
<svg width="22" height="18" style="left:1728px;top:1041px" viewBox="0 0 22 18"><path d="M1 6 H5 L10 1.5 V16.5 L5 12 H1 Z" fill="none" stroke="#fff" stroke-width="1.3"/><path d="M13 6 Q15 9 13 12" fill="none" stroke="#fff" stroke-width="1.3"/><path d="M16 3.5 Q20 9 16 14.5" fill="none" stroke="#888" stroke-width="1.3"/><path d="M19 1 Q24 9 19 17" fill="none" stroke="#666" stroke-width="1.2"/></svg>
<svg width="22" height="18" style="left:1758px;top:1041px" viewBox="0 0 22 18"><rect x="5.5" y="4.5" width="14" height="10" rx="1.5" fill="none" stroke="#fff" stroke-width="1.3"/><rect x="19.5" y="7.5" width="2" height="4" fill="#fff"/><rect x="8" y="7" width="9" height="5" fill="#fff"/><path d="M2 2 V7 M5 2 V7 M1 7 H6 V10 Q6 12 3.5 12 V17" fill="none" stroke="#fff" stroke-width="1.3"/></svg>
<div class="t" style="left:1809.00px;top:1032px;font-size:15px;color:#fff;transform:scaleX(0.9206);transform-origin:0 0;">10:15 AM</div>
<div class="t" style="left:1799.00px;top:1052px;font-size:15px;color:#fff;transform:scaleX(0.9315);transform-origin:0 0;">11/11/2022</div>
<div class="a" style="left:1876px;top:1040px;width:20px;height:20px;border-radius:50%;background:#f0845c"></div>
<div class="t" style="left:1883.00px;top:1043px;font-size:15px;color:#222;transform:scaleX(0.8750);transform-origin:0 0;">8</div>
</body></html>
